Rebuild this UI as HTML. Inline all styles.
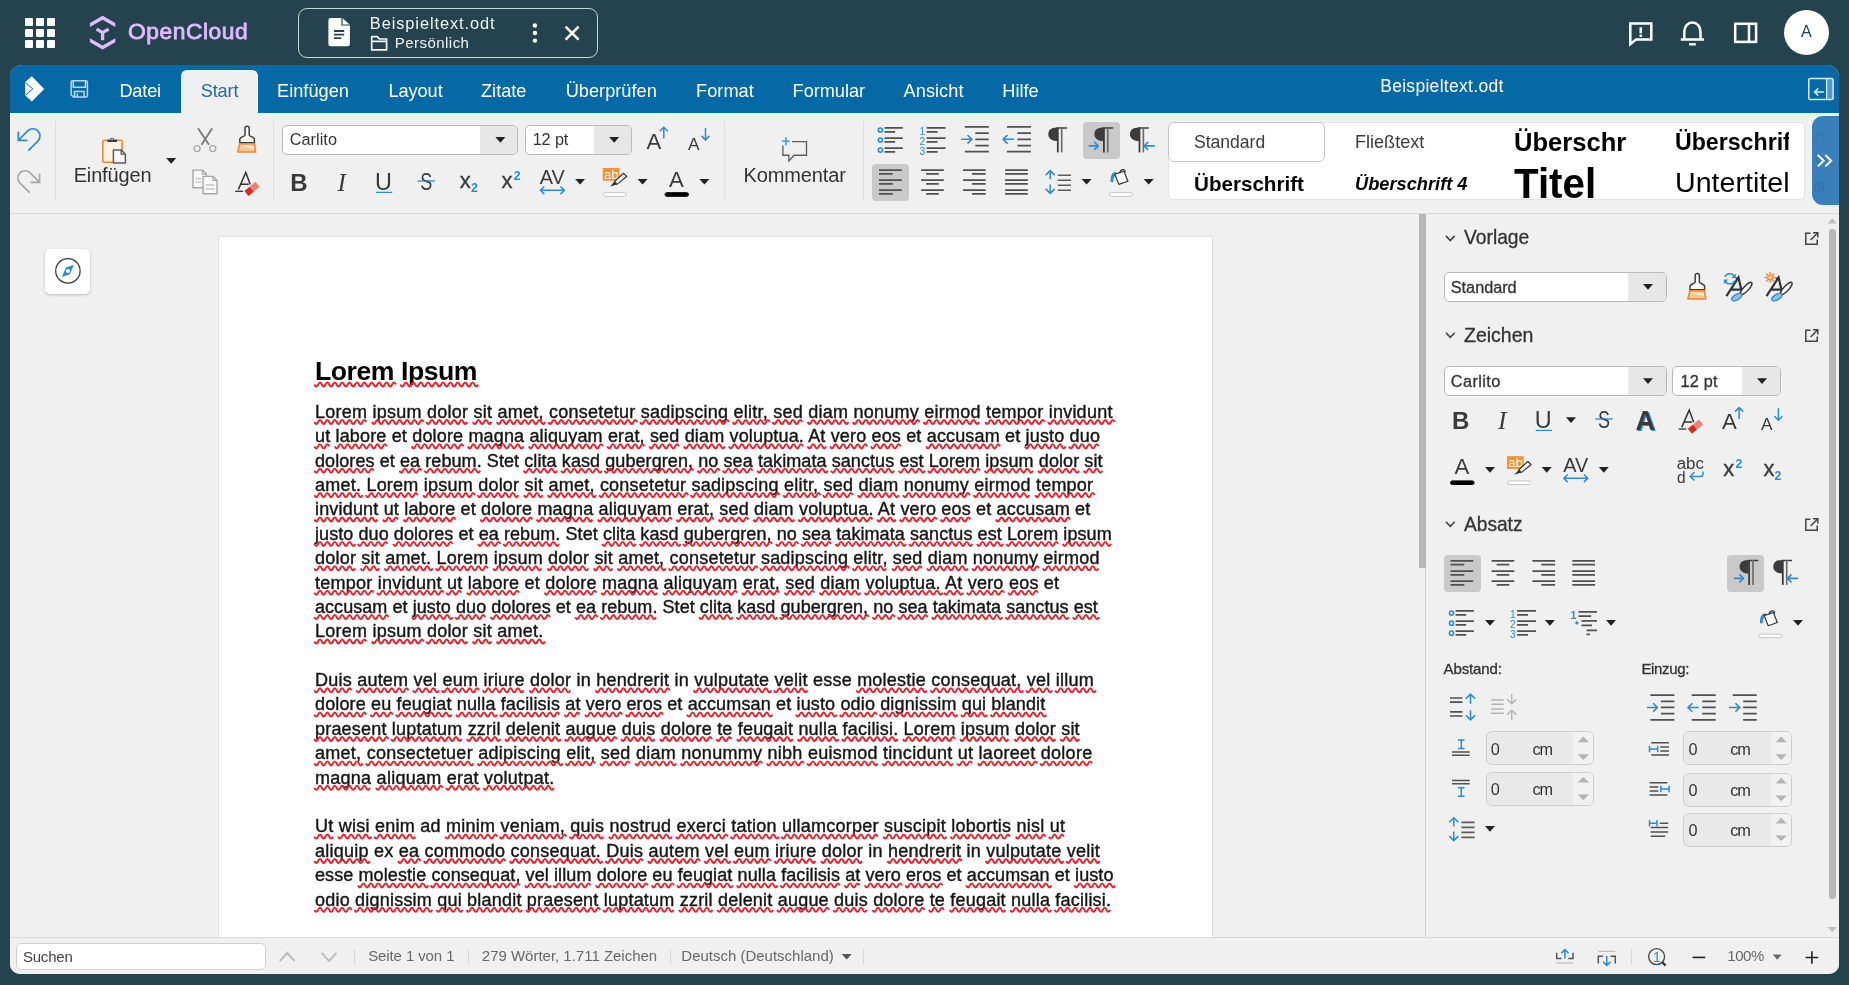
<!DOCTYPE html>
<html lang="de"><head><meta charset="utf-8"><title>Beispieltext.odt - OpenCloud</title>
<style>
html,body{margin:0;padding:0}
body{width:1849px;height:985px;overflow:hidden;background:#25434f;font-family:"Liberation Sans",sans-serif;position:relative}
.t{position:absolute;white-space:nowrap;line-height:1;display:block}
.b{position:absolute;box-sizing:border-box}
#top{filter:opacity(1);position:absolute;left:0;top:0;width:1849px;height:65px}
#frame{filter:opacity(1);position:absolute;left:10px;top:65px;width:1829px;height:909.4px;overflow:hidden;border-radius:12px 12px 10px 10px;background:#f0f0f0}
#fi{position:absolute;left:-10px;top:-65px;width:1849px;height:985px}
svg.ov{filter:opacity(1);position:absolute;left:0;top:0;pointer-events:none}

</style></head>
<body>
<div id="top">
<div class="b" style="left:25.0px;top:18.0px;width:8.3px;height:8.3px;background:#fff;border-radius:1px"></div>
<div class="b" style="left:36.0px;top:18.0px;width:8.3px;height:8.3px;background:#fff;border-radius:1px"></div>
<div class="b" style="left:47.0px;top:18.0px;width:8.3px;height:8.3px;background:#fff;border-radius:1px"></div>
<div class="b" style="left:25.0px;top:29.0px;width:8.3px;height:8.3px;background:#fff;border-radius:1px"></div>
<div class="b" style="left:36.0px;top:29.0px;width:8.3px;height:8.3px;background:#fff;border-radius:1px"></div>
<div class="b" style="left:47.0px;top:29.0px;width:8.3px;height:8.3px;background:#fff;border-radius:1px"></div>
<div class="b" style="left:25.0px;top:40.0px;width:8.3px;height:8.3px;background:#fff;border-radius:1px"></div>
<div class="b" style="left:36.0px;top:40.0px;width:8.3px;height:8.3px;background:#fff;border-radius:1px"></div>
<div class="b" style="left:47.0px;top:40.0px;width:8.3px;height:8.3px;background:#fff;border-radius:1px"></div>
<span class="t" id="t1" style="left:128.0px;top:20.0px;font-size:22.8px;color:#e2baff;letter-spacing:0.540px;-webkit-text-stroke:0.8px #e2baff;">OpenCloud</span>
<div class="b" style="left:298.0px;top:8.0px;width:299.5px;height:50.0px;border:1.3px solid #c9d3d7;border-radius:9px"></div>
<span class="t" id="t2" style="left:369.8px;top:14.7px;font-size:16.4px;color:#f0f4f5;letter-spacing:0.914px;">Beispieltext.odt</span>
<span class="t" id="t3" style="left:394.8px;top:35.1px;font-size:15px;color:#f0f4f5;letter-spacing:0.455px;">Persönlich</span>
<div class="b" style="left:1783.8px;top:9.7px;width:45.2px;height:45.2px;background:#fff;border-radius:50%"></div>
<span class="t" id="t4" style="left:1800.9px;top:24.2px;font-size:16px;color:#20434f;letter-spacing:0.928px;">A</span>
</div>
<div id="frame"><div id="fi">
<div class="b" style="left:10.0px;top:65.0px;width:1829.0px;height:48.0px;background:#0569a5"></div>
<div class="b" style="left:10.0px;top:113.0px;width:1829.0px;height:2.0px;background:#e0ffff"></div>
<div class="b" style="left:180.5px;top:69.5px;width:77.6px;height:45.5px;background:#f0f0f0;border-radius:6px 6px 0 0;border:1px solid #e0ffff;border-bottom:none"></div>
<span class="t" id="t5" style="left:119.4px;top:81.9px;font-size:18.2px;color:#fff;letter-spacing:-0.174px;">Datei</span>
<span class="t" id="t6" style="left:200.7px;top:81.9px;font-size:18.2px;color:#1f6aa0;letter-spacing:-0.144px;">Start</span>
<span class="t" id="t7" style="left:277.0px;top:81.9px;font-size:18.2px;color:#fff;letter-spacing:0.023px;">Einfügen</span>
<span class="t" id="t8" style="left:388.5px;top:81.9px;font-size:18.2px;color:#fff;letter-spacing:-0.085px;">Layout</span>
<span class="t" id="t9" style="left:481.0px;top:81.9px;font-size:18.2px;color:#fff;letter-spacing:0.000px;">Zitate</span>
<span class="t" id="t10" style="left:565.7px;top:81.9px;font-size:18.2px;color:#fff;letter-spacing:0.010px;">Überprüfen</span>
<span class="t" id="t11" style="left:696.0px;top:81.9px;font-size:18.2px;color:#fff;letter-spacing:0.032px;">Format</span>
<span class="t" id="t12" style="left:792.6px;top:81.9px;font-size:18.2px;color:#fff;letter-spacing:-0.046px;">Formular</span>
<span class="t" id="t13" style="left:903.6px;top:81.9px;font-size:18.2px;color:#fff;letter-spacing:0.035px;">Ansicht</span>
<span class="t" id="t14" style="left:1002.3px;top:81.9px;font-size:18.2px;color:#fff;letter-spacing:-0.038px;">Hilfe</span>
<span class="t" id="t15" style="left:1380.2px;top:78.3px;font-size:17.5px;color:#fff;letter-spacing:0.295px;">Beispieltext.odt</span>
<div class="b" style="left:10.0px;top:115.0px;width:1829.0px;height:98.0px;background:#f0f0f0"></div>
<div class="b" style="left:10.0px;top:213.0px;width:1829.0px;height:1.2px;background:#dadada"></div>
<div class="b" style="left:55.2px;top:120.6px;width:1.1px;height:79.6px;background:#dfdfdf"></div>
<div class="b" style="left:272.9px;top:120.6px;width:1.1px;height:79.6px;background:#dfdfdf"></div>
<div class="b" style="left:723.9px;top:120.6px;width:1.1px;height:79.6px;background:#dfdfdf"></div>
<div class="b" style="left:862.7px;top:120.6px;width:1.1px;height:79.6px;background:#dfdfdf"></div>
<div class="b" style="left:282.4px;top:125.1px;width:235.9px;height:29.6px;background:#fff;border:1px solid #b9b9b9;border-radius:5px;overflow:hidden"></div><div class="b" style="left:480.2px;top:126.1px;width:37.1px;height:27.6px;background:#e7e7e7;border-radius:0 4px 4px 0"></div>
<div class="b" style="left:524.7px;top:125.1px;width:106.9px;height:29.6px;background:#fff;border:1px solid #b9b9b9;border-radius:5px;overflow:hidden"></div><div class="b" style="left:594.0px;top:126.1px;width:36.6px;height:27.6px;background:#e7e7e7;border-radius:0 4px 4px 0"></div>
<span class="t" id="t16" style="left:289.7px;top:131.4px;font-size:16.25px;color:#333;letter-spacing:0.047px;">Carlito</span>
<span class="t" id="t17" style="left:532.7px;top:131.4px;font-size:16.25px;color:#333;letter-spacing:-0.111px;">12 pt</span>
<span class="t" id="t18" style="left:73.7px;top:165.0px;font-size:20px;color:#333;letter-spacing:-0.159px;">Einfügen</span>
<span class="t" id="t19" style="left:743.5px;top:165.1px;font-size:20px;color:#333;letter-spacing:-0.131px;">Kommentar</span>
<div class="b" style="left:872.2px;top:164.1px;width:37.1px;height:36.8px;background:#c9c9c9;border-radius:4px"></div>
<div class="b" style="left:1082.7px;top:122.1px;width:37.2px;height:36.7px;background:#c9c9c9;border-radius:4px"></div>
<div class="b" style="left:1167.7px;top:122.0px;width:637.8px;height:78.3px;background:#fff;border-radius:5px;border:1px solid #e4e4e4"></div>
<div class="b" style="left:1167.7px;top:122.0px;width:157.0px;height:39.6px;background:#fff;border:1px solid #c6c6c6;border-radius:6px"></div>
<div class="b" style="left:1167.7px;top:122px;width:621.3px;height:78.3px;overflow:hidden"><div style="position:absolute;left:-1167.7px;top:-122px">
<span class="t" id="t20" style="left:1193.6px;top:132.6px;font-size:18.4px;color:#3a3a3a;transform:scaleX(0.9539);transform-origin:0 0;">Standard</span>
<span class="t" id="t21" style="left:1354.5px;top:132.6px;font-size:18.4px;color:#3a3a3a;transform:scaleX(0.9828);transform-origin:0 0;">Fließtext</span>
<span class="t" id="t22" style="left:1514.3px;top:128.9px;font-size:26.5px;color:#000;font-weight:bold;transform:scaleX(0.9643);transform-origin:0 0;">Überschr</span>
<span class="t" id="t23" style="left:1674.5px;top:130.5px;font-size:23px;color:#000;font-weight:bold;transform:scaleX(1.0065);transform-origin:0 0;">Überschrift</span>
<span class="t" id="t24" style="left:1194.4px;top:172.5px;font-size:21px;color:#000;font-weight:bold;transform:scaleX(0.9810);transform-origin:0 0;">Überschrift</span>
<span class="t" id="t25" style="left:1354.5px;top:174.6px;font-size:18.6px;color:#000;font-weight:bold;font-style:italic;transform:scaleX(0.9808);transform-origin:0 0;">Überschrift 4</span>
<span class="t" id="t26" style="left:1514.3px;top:162.8px;font-size:42px;color:#000;font-weight:bold;transform:scaleX(0.9592);transform-origin:0 0;">Titel</span>
<span class="t" id="t27" style="left:1674.5px;top:170.3px;font-size:26.8px;color:#000;transform:scaleX(1.0678);transform-origin:0 0;">Untertitel</span>
</div></div>
<div class="b" style="left:1811.6px;top:116.3px;width:30.0px;height:89.0px;background:#397fbc;border-radius:11px 0 0 11px"></div>
<div class="b" style="left:10.0px;top:214.0px;width:1416.0px;height:723.0px;background:#f0f0f0"></div>
<div class="b" style="left:218.0px;top:236.0px;width:995.0px;height:720.0px;background:#fff;border:1px solid #dedede;border-radius:2px"></div>
<div class="b" style="left:45.0px;top:249.0px;width:45.2px;height:45.2px;background:#fff;border-radius:5px;box-shadow:0 1px 3px rgba(0,0,0,.22)"></div>
<span class="t" id="t28" style="left:315.0px;top:357.9px;font-size:26.6px;color:#000;font-weight:bold;letter-spacing:-0.45px;"><span class="w">Lorem</span> <span class="w">Ipsum</span></span>
<span class="t" id="t29" style="left:315.0px;top:402.8px;font-size:18px;color:#151515;letter-spacing:0.243px;-webkit-text-stroke:0.4px #151515;"><span class="w">Lorem</span> <span class="w">ipsum</span> <span class="w">dolor</span> <span class="w">sit</span> <span class="w">amet,</span> <span class="w">consetetur</span> <span class="w">sadipscing</span> <span class="w">elitr,</span> <span class="w">sed</span> <span class="w">diam</span> <span class="w">nonumy</span> <span class="w">eirmod</span> <span class="w">tempor</span> <span class="w">invidunt</span></span>
<span class="t" id="t30" style="left:315.0px;top:427.2px;font-size:18px;color:#151515;letter-spacing:0.162px;-webkit-text-stroke:0.4px #151515;"><span class="w">ut</span> <span class="w">labore</span> et <span class="w">dolore</span> <span class="w">magna</span> <span class="w">aliquyam</span> <span class="w">erat,</span> <span class="w">sed</span> <span class="w">diam</span> <span class="w">voluptua.</span> <span class="w">At</span> <span class="w">vero</span> <span class="w">eos</span> et <span class="w">accusam</span> et <span class="w">justo</span> <span class="w">duo</span></span>
<span class="t" id="t31" style="left:315.0px;top:451.5px;font-size:18px;color:#151515;letter-spacing:0.082px;-webkit-text-stroke:0.4px #151515;"><span class="w">dolores</span> et <span class="w">ea</span> <span class="w">rebum.</span> Stet <span class="w">clita</span> <span class="w">kasd</span> <span class="w">gubergren,</span> <span class="w">no</span> <span class="w">sea</span> <span class="w">takimata</span> <span class="w">sanctus</span> <span class="w">est</span> <span class="w">Lorem</span> <span class="w">ipsum</span> <span class="w">dolor</span> <span class="w">sit</span></span>
<span class="t" id="t32" style="left:315.0px;top:475.9px;font-size:18px;color:#151515;letter-spacing:0.226px;-webkit-text-stroke:0.4px #151515;"><span class="w">amet.</span> <span class="w">Lorem</span> <span class="w">ipsum</span> <span class="w">dolor</span> <span class="w">sit</span> <span class="w">amet,</span> <span class="w">consetetur</span> <span class="w">sadipscing</span> <span class="w">elitr,</span> <span class="w">sed</span> <span class="w">diam</span> <span class="w">nonumy</span> <span class="w">eirmod</span> <span class="w">tempor</span></span>
<span class="t" id="t33" style="left:315.0px;top:500.3px;font-size:18px;color:#151515;letter-spacing:0.179px;-webkit-text-stroke:0.4px #151515;"><span class="w">invidunt</span> <span class="w">ut</span> <span class="w">labore</span> et <span class="w">dolore</span> <span class="w">magna</span> <span class="w">aliquyam</span> <span class="w">erat,</span> <span class="w">sed</span> <span class="w">diam</span> <span class="w">voluptua.</span> <span class="w">At</span> <span class="w">vero</span> <span class="w">eos</span> et <span class="w">accusam</span> et</span>
<span class="t" id="t34" style="left:315.0px;top:524.7px;font-size:18px;color:#151515;letter-spacing:0.074px;-webkit-text-stroke:0.4px #151515;"><span class="w">justo</span> <span class="w">duo</span> <span class="w">dolores</span> et <span class="w">ea</span> <span class="w">rebum.</span> Stet <span class="w">clita</span> <span class="w">kasd</span> <span class="w">gubergren,</span> <span class="w">no</span> <span class="w">sea</span> <span class="w">takimata</span> <span class="w">sanctus</span> <span class="w">est</span> <span class="w">Lorem</span> <span class="w">ipsum</span></span>
<span class="t" id="t35" style="left:315.0px;top:549.1px;font-size:18px;color:#151515;letter-spacing:0.212px;-webkit-text-stroke:0.4px #151515;"><span class="w">dolor</span> <span class="w">sit</span> <span class="w">amet.</span> <span class="w">Lorem</span> <span class="w">ipsum</span> <span class="w">dolor</span> <span class="w">sit</span> <span class="w">amet,</span> <span class="w">consetetur</span> <span class="w">sadipscing</span> <span class="w">elitr,</span> <span class="w">sed</span> <span class="w">diam</span> <span class="w">nonumy</span> <span class="w">eirmod</span></span>
<span class="t" id="t36" style="left:315.0px;top:573.5px;font-size:18px;color:#151515;letter-spacing:0.242px;-webkit-text-stroke:0.4px #151515;"><span class="w">tempor</span> <span class="w">invidunt</span> <span class="w">ut</span> <span class="w">labore</span> et <span class="w">dolore</span> <span class="w">magna</span> <span class="w">aliquyam</span> <span class="w">erat,</span> <span class="w">sed</span> <span class="w">diam</span> <span class="w">voluptua.</span> <span class="w">At</span> <span class="w">vero</span> <span class="w">eos</span> et</span>
<span class="t" id="t37" style="left:315.0px;top:597.9px;font-size:18px;color:#151515;letter-spacing:0.054px;-webkit-text-stroke:0.4px #151515;"><span class="w">accusam</span> et <span class="w">justo</span> <span class="w">duo</span> <span class="w">dolores</span> et <span class="w">ea</span> <span class="w">rebum.</span> Stet <span class="w">clita</span> <span class="w">kasd</span> <span class="w">gubergren,</span> <span class="w">no</span> <span class="w">sea</span> <span class="w">takimata</span> <span class="w">sanctus</span> <span class="w">est</span></span>
<span class="t" id="t38" style="left:315.0px;top:622.3px;font-size:18px;color:#151515;letter-spacing:0.234px;-webkit-text-stroke:0.4px #151515;"><span class="w">Lorem</span> <span class="w">ipsum</span> <span class="w">dolor</span> <span class="w">sit</span> <span class="w">amet.</span></span>
<span class="t" id="t39" style="left:315.0px;top:671.1px;font-size:18px;color:#151515;letter-spacing:0.228px;-webkit-text-stroke:0.4px #151515;"><span class="w">Duis</span> <span class="w">autem</span> <span class="w">vel</span> <span class="w">eum</span> <span class="w">iriure</span> <span class="w">dolor</span> in <span class="w">hendrerit</span> in <span class="w">vulputate</span> <span class="w">velit</span> esse <span class="w">molestie</span> <span class="w">consequat,</span> <span class="w">vel</span> <span class="w">illum</span></span>
<span class="t" id="t40" style="left:315.0px;top:695.4px;font-size:18px;color:#151515;letter-spacing:0.147px;-webkit-text-stroke:0.4px #151515;"><span class="w">dolore</span> <span class="w">eu</span> <span class="w">feugiat</span> <span class="w">nulla</span> <span class="w">facilisis</span> <span class="w">at</span> <span class="w">vero</span> <span class="w">eros</span> et <span class="w">accumsan</span> et <span class="w">iusto</span> <span class="w">odio</span> <span class="w">dignissim</span> <span class="w">qui</span> <span class="w">blandit</span></span>
<span class="t" id="t41" style="left:315.0px;top:719.8px;font-size:18px;color:#151515;letter-spacing:0.196px;-webkit-text-stroke:0.4px #151515;"><span class="w">praesent</span> <span class="w">luptatum</span> <span class="w">zzril</span> <span class="w">delenit</span> <span class="w">augue</span> <span class="w">duis</span> <span class="w">dolore</span> <span class="w">te</span> <span class="w">feugait</span> <span class="w">nulla</span> <span class="w">facilisi.</span> <span class="w">Lorem</span> <span class="w">ipsum</span> <span class="w">dolor</span> <span class="w">sit</span></span>
<span class="t" id="t42" style="left:315.0px;top:744.2px;font-size:18px;color:#151515;letter-spacing:0.266px;-webkit-text-stroke:0.4px #151515;"><span class="w">amet,</span> <span class="w">consectetuer</span> <span class="w">adipiscing</span> <span class="w">elit,</span> <span class="w">sed</span> <span class="w">diam</span> <span class="w">nonummy</span> <span class="w">nibh</span> <span class="w">euismod</span> <span class="w">tincidunt</span> <span class="w">ut</span> <span class="w">laoreet</span> <span class="w">dolore</span></span>
<span class="t" id="t43" style="left:315.0px;top:768.6px;font-size:18px;color:#151515;letter-spacing:0.259px;-webkit-text-stroke:0.4px #151515;"><span class="w">magna</span> <span class="w">aliquam</span> <span class="w">erat</span> <span class="w">volutpat.</span></span>
<span class="t" id="t44" style="left:315.0px;top:817.4px;font-size:18px;color:#151515;letter-spacing:0.241px;-webkit-text-stroke:0.4px #151515;"><span class="w">Ut</span> <span class="w">wisi</span> <span class="w">enim</span> ad <span class="w">minim</span> <span class="w">veniam,</span> <span class="w">quis</span> <span class="w">nostrud</span> <span class="w">exerci</span> <span class="w">tation</span> <span class="w">ullamcorper</span> <span class="w">suscipit</span> <span class="w">lobortis</span> <span class="w">nisl</span> <span class="w">ut</span></span>
<span class="t" id="t45" style="left:315.0px;top:841.8px;font-size:18px;color:#151515;letter-spacing:0.245px;-webkit-text-stroke:0.4px #151515;"><span class="w">aliquip</span> ex <span class="w">ea</span> <span class="w">commodo</span> <span class="w">consequat.</span> <span class="w">Duis</span> <span class="w">autem</span> <span class="w">vel</span> <span class="w">eum</span> <span class="w">iriure</span> <span class="w">dolor</span> in <span class="w">hendrerit</span> in <span class="w">vulputate</span> <span class="w">velit</span></span>
<span class="t" id="t46" style="left:315.0px;top:866.2px;font-size:18px;color:#151515;letter-spacing:0.097px;-webkit-text-stroke:0.4px #151515;">esse <span class="w">molestie</span> <span class="w">consequat,</span> <span class="w">vel</span> <span class="w">illum</span> <span class="w">dolore</span> <span class="w">eu</span> <span class="w">feugiat</span> <span class="w">nulla</span> <span class="w">facilisis</span> <span class="w">at</span> <span class="w">vero</span> <span class="w">eros</span> et <span class="w">accumsan</span> et <span class="w">iusto</span></span>
<span class="t" id="t47" style="left:315.0px;top:890.6px;font-size:18px;color:#151515;letter-spacing:0.209px;-webkit-text-stroke:0.4px #151515;"><span class="w">odio</span> <span class="w">dignissim</span> <span class="w">qui</span> <span class="w">blandit</span> <span class="w">praesent</span> <span class="w">luptatum</span> <span class="w">zzril</span> <span class="w">delenit</span> <span class="w">augue</span> <span class="w">duis</span> <span class="w">dolore</span> <span class="w">te</span> <span class="w">feugait</span> <span class="w">nulla</span> <span class="w">facilisi.</span></span>
<div class="b" style="left:1426.0px;top:214.0px;width:413.0px;height:723.0px;background:#f0f0f0"></div>
<div class="b" style="left:1425.0px;top:214.0px;width:1.0px;height:723.0px;background:#d4d4d4"></div>
<div class="b" style="left:1419.2px;top:214.0px;width:6.8px;height:354.0px;background:#b7b7b7"></div>
<div class="b" style="left:1829.3px;top:229.0px;width:6.3px;height:670.0px;background:#b7b7b7;border-radius:3px"></div>
<span class="t" id="t48" style="left:1464.4px;top:227.3px;font-size:20.4px;color:#333;transform:scaleX(0.9440);transform-origin:0 0;-webkit-text-stroke:0.3px #333;">Vorlage</span>
<span class="t" id="t49" style="left:1464.4px;top:324.7px;font-size:20.4px;color:#333;transform:scaleX(0.9566);transform-origin:0 0;-webkit-text-stroke:0.3px #333;">Zeichen</span>
<span class="t" id="t50" style="left:1464.4px;top:513.9px;font-size:20.4px;color:#333;transform:scaleX(0.9383);transform-origin:0 0;-webkit-text-stroke:0.3px #333;">Absatz</span>
<div class="b" style="left:1444.0px;top:272.3px;width:222.8px;height:29.3px;background:#fff;border:1px solid #b9b9b9;border-radius:5px;overflow:hidden"></div><div class="b" style="left:1628.3px;top:273.3px;width:37.5px;height:27.3px;background:#e7e7e7;border-radius:0 4px 4px 0"></div>
<div class="b" style="left:1444.0px;top:366.4px;width:222.8px;height:29.2px;background:#fff;border:1px solid #b9b9b9;border-radius:5px;overflow:hidden"></div><div class="b" style="left:1628.3px;top:367.4px;width:37.5px;height:27.2px;background:#e7e7e7;border-radius:0 4px 4px 0"></div>
<div class="b" style="left:1672.0px;top:366.4px;width:108.8px;height:29.2px;background:#fff;border:1px solid #b9b9b9;border-radius:5px;overflow:hidden"></div><div class="b" style="left:1742.3px;top:367.4px;width:37.5px;height:27.2px;background:#e7e7e7;border-radius:0 4px 4px 0"></div>
<span class="t" id="t51" style="left:1450.8px;top:278.9px;font-size:16.25px;color:#333;letter-spacing:-0.019px;-webkit-text-stroke:0.3px #333;">Standard</span>
<span class="t" id="t52" style="left:1450.8px;top:373.0px;font-size:16.25px;color:#333;letter-spacing:0.419px;-webkit-text-stroke:0.3px #333;">Carlito</span>
<span class="t" id="t53" style="left:1680.4px;top:373.0px;font-size:16.25px;color:#333;letter-spacing:0.249px;-webkit-text-stroke:0.3px #333;">12 pt</span>
<div class="b" style="left:1444.0px;top:555.2px;width:37.0px;height:36.7px;background:#c9c9c9;border-radius:4px"></div>
<div class="b" style="left:1727.3px;top:555.2px;width:36.3px;height:36.7px;background:#c9c9c9;border-radius:4px"></div>
<span class="t" id="t54" style="left:1443.6px;top:660.8px;font-size:15px;color:#333;letter-spacing:-0.127px;-webkit-text-stroke:0.3px #333;">Abstand:</span>
<span class="t" id="t55" style="left:1641.4px;top:660.8px;font-size:15px;color:#333;letter-spacing:-0.350px;-webkit-text-stroke:0.3px #333;">Einzug:</span>
<div class="b" style="left:1485.5px;top:731.3px;width:108.3px;height:34.0px;background:#e9e9e9;border:1px solid #cdcdcd;border-radius:6px"></div><div class="b" style="left:1573.0px;top:732.3px;width:19.8px;height:32.0px;background:#f1f1f1;border-radius:0 5px 5px 0"></div><span class="t" id="t56" style="left:1490.7px;top:740.6px;font-size:16.25px;color:#333;">0</span><span class="t" id="t57" style="left:1532.4px;top:740.6px;font-size:16.25px;color:#333;letter-spacing:-1.086px;">cm</span>
<div class="b" style="left:1485.5px;top:771.7px;width:108.3px;height:34.0px;background:#e9e9e9;border:1px solid #cdcdcd;border-radius:6px"></div><div class="b" style="left:1573.0px;top:772.7px;width:19.8px;height:32.0px;background:#f1f1f1;border-radius:0 5px 5px 0"></div><span class="t" id="t58" style="left:1490.7px;top:781.0px;font-size:16.25px;color:#333;">0</span><span class="t" id="t59" style="left:1532.4px;top:781.0px;font-size:16.25px;color:#333;letter-spacing:-1.086px;">cm</span>
<div class="b" style="left:1683.3px;top:731.3px;width:108.3px;height:34.0px;background:#e9e9e9;border:1px solid #cdcdcd;border-radius:6px"></div><div class="b" style="left:1770.8px;top:732.3px;width:19.8px;height:32.0px;background:#f1f1f1;border-radius:0 5px 5px 0"></div><span class="t" id="t60" style="left:1688.5px;top:740.6px;font-size:16.25px;color:#333;">0</span><span class="t" id="t61" style="left:1730.2px;top:740.6px;font-size:16.25px;color:#333;letter-spacing:-1.086px;">cm</span>
<div class="b" style="left:1683.3px;top:772.6px;width:108.3px;height:34.0px;background:#e9e9e9;border:1px solid #cdcdcd;border-radius:6px"></div><div class="b" style="left:1770.8px;top:773.6px;width:19.8px;height:32.0px;background:#f1f1f1;border-radius:0 5px 5px 0"></div><span class="t" id="t62" style="left:1688.5px;top:781.9px;font-size:16.25px;color:#333;">0</span><span class="t" id="t63" style="left:1730.2px;top:781.9px;font-size:16.25px;color:#333;letter-spacing:-1.086px;">cm</span>
<div class="b" style="left:1683.3px;top:812.5px;width:108.3px;height:34.0px;background:#e9e9e9;border:1px solid #cdcdcd;border-radius:6px"></div><div class="b" style="left:1770.8px;top:813.5px;width:19.8px;height:32.0px;background:#f1f1f1;border-radius:0 5px 5px 0"></div><span class="t" id="t64" style="left:1688.5px;top:821.8px;font-size:16.25px;color:#333;">0</span><span class="t" id="t65" style="left:1730.2px;top:821.8px;font-size:16.25px;color:#333;letter-spacing:-1.086px;">cm</span>
<div class="b" style="left:10.0px;top:937.0px;width:1829.0px;height:38.0px;background:#f0f0f0"></div>
<div class="b" style="left:10.0px;top:937.0px;width:1829.0px;height:1.0px;background:#d9d9d9"></div>
<div class="b" style="left:16.2px;top:942.9px;width:249.5px;height:26.9px;background:#fff;border:1px solid #cfcfcf;border-radius:5px"></div>
<span class="t" id="t66" style="left:22.9px;top:948.5px;font-size:15px;color:#444;letter-spacing:-0.196px;">Suchen</span>
<div class="b" style="left:354.0px;top:948.6px;width:1.1px;height:15.7px;background:#d6d6d6"></div>
<div class="b" style="left:468.1px;top:948.6px;width:1.1px;height:15.7px;background:#d6d6d6"></div>
<div class="b" style="left:670.3px;top:948.6px;width:1.1px;height:15.7px;background:#d6d6d6"></div>
<div class="b" style="left:862.9px;top:948.6px;width:1.1px;height:15.7px;background:#d6d6d6"></div>
<div class="b" style="left:1631.2px;top:948.6px;width:1.1px;height:15.7px;background:#d6d6d6"></div>
<span class="t" id="t67" style="left:368.2px;top:948.2px;font-size:15px;color:#686868;letter-spacing:-0.105px;">Seite 1 von 1</span>
<span class="t" id="t68" style="left:481.8px;top:948.2px;font-size:15px;color:#686868;letter-spacing:-0.011px;">279 Wörter, 1.711 Zeichen</span>
<span class="t" id="t69" style="left:681.3px;top:948.2px;font-size:15px;color:#686868;letter-spacing:-0.004px;">Deutsch (Deutschland)</span>
<span class="t" id="t70" style="left:1727.3px;top:947.7px;font-size:15px;color:#686868;letter-spacing:-0.469px;">100%</span>
</div></div>
<svg class="ov" width="1849" height="985" viewBox="0 0 1849 985" fill="none">
<g fill="#e2baff"><polygon points="89.9,23 102.6,15.8 115.3,23 115.3,26.9 102.6,19.7 89.9,26.9"/><polygon points="89.9,38.3 102.6,45.5 115.3,38.3 115.3,42.2 102.6,49.4 89.9,42.2"/></g><g stroke="#e2baff" stroke-width="3.3"><path d="M102.6 31.5V40.2M102.6 32.6L96.6 29.1M102.6 32.6L108.6 29.1"/></g>
<path d="M330.600 17.900H341.400V25.600H349.900V44A2.200 2.200 0 0 1 347.700 46.200H330.600A2.200 2.200 0 0 1 328.400 44V20.100A2.200 2.200 0 0 1 330.600 17.900Z" fill="#fff"/><path d="M342.600 18.300L349.600 24.500H342.600Z" fill="#fff"/><path d="M334 31H344.200M334 34.600H344.200M334 38.100H341.200" stroke="#25434f" stroke-width="1.900"/>
<path d="M371.7 36.6h5.6l2 2.4h7.3v10.900h-14.9z M371.7 41.3h14.9" stroke="#f0f4f5" stroke-width="1.7" stroke-linejoin="round"/>
<circle cx="534.9" cy="25.5" r="2.2" fill="#fff"/>
<circle cx="534.9" cy="33" r="2.2" fill="#fff"/>
<circle cx="534.9" cy="40.6" r="2.2" fill="#fff"/>
<path d="M565.6 26.6L578.6 39.6M578.6 26.6L565.6 39.6" stroke="#fff" stroke-width="2.6"/>
<path d="M1630.3 23.5h21v16h-15.3l-5.7 4.6z" stroke="#fff" stroke-width="2.5" stroke-linejoin="miter"/><path d="M1640.8 27.3v6" stroke="#fff" stroke-width="2.6"/><rect x="1639.5" y="34.6" width="2.6" height="2.4" fill="#fff"/>
<path d="M1680.8 39.6h23.2M1684.3 39.6v-8.2a8.1 8.8 0 0 1 16.2 0v8.2" stroke="#fff" stroke-width="2.5"/><path d="M1689 44.3h6.8" stroke="#fff" stroke-width="2.4"/>
<rect x="1735.2" y="23.8" width="20.9" height="18.1" stroke="#fff" stroke-width="2.5"/><path d="M1749 23.8v18.1" stroke="#fff" stroke-width="2.5"/>
<polygon points="25.2,82 31.8,76.2 44.2,88.9 31.8,101.5 25.2,95.5" fill="#fff"/><path d="M25.6 82.6L32.8 88.9L25.6 95.2" stroke="#0569a5" stroke-width="1"/>
<g stroke="#b9d9f1" stroke-width="1.5"><path d="M72.8 80.8h13a1.6 1.6 0 0 1 1.6 1.6v13a1.6 1.6 0 0 1-1.6 1.6H73.4l-2.3-2.3V82.4a1.6 1.6 0 0 1 1.6-1.600z"/><path d="M73.3 80.8v6.4h12.2v-6.4M74.5 97v-5.6h9.6v5.6M77.3 97v-3.600"/></g>
<rect x="1826.6" y="78.6" width="6.5" height="21" fill="#4e97d1"/><rect x="1808.8" y="78.6" width="24.3" height="21" rx="1.5" stroke="#d6ecfa" stroke-width="1.5"/><path d="M1826.6 78.600v21" stroke="#d6ecfa" stroke-width="1.3"/><path d="M1814.600 92h9.200M1818.200 88.400l-3.600 3.600 3.600 3.600" stroke="#d6ecfa" stroke-width="1.5"/>
<path d="M18.3 131.8V140.3H27.4M18.3 140.3L27.7 130.86A7.2 7.2 0 0 1 37.9 141.04L28.2 150.7" stroke="#2b8cd1" stroke-width="1.7"/>
<g transform="translate(57.9 42) scale(-1 1)"><path d="M18.3 131.8V140.3H27.4M18.3 140.3L27.7 130.86A7.2 7.2 0 0 1 37.9 141.04L28.2 150.7" stroke="#a8a8a8" stroke-width="1.7"/></g>
<g transform="translate(101.8 137.5)" ><rect x="1" y="2.800" width="19.300" height="22" rx="1.500" fill="#fdf2e6" stroke="#ed8733" stroke-width="1.600"/><path d="M5.600 4.500V2.200H8.300A1.900 1.900 0 0 1 12.200 2.200H15.300V4.500Z" fill="#3a3a3a"/><circle cx="10.250" cy="1.900" r="0.800" fill="#fdf2e6"/><path d="M11.600 12.400H19.300L23.600 16.700V25.600H11.600Z" fill="#f7f7f7" stroke="#5e5e5e" stroke-width="1.500" stroke-linejoin="round"/><path d="M19.300 12.400V16.700H23.600" stroke="#5e5e5e" stroke-width="1.300"/></g>
<g transform="translate(166.2 158.0)" ><path d="M0 0H10L5 5.7Z" fill="#222"/></g>
<g transform="translate(193.8 128.0)" ><path d="M4.200 0.300L15.200 16.800M18.400 0.300L7.800 16.800" stroke="#7c7c7c" stroke-width="1.900"/><circle cx="3.300" cy="20.600" r="3" stroke="#a9a9a9" stroke-width="1.400"/><circle cx="19" cy="20.600" r="3" stroke="#a9a9a9" stroke-width="1.400"/></g>
<g transform="translate(237.0 126.4)" ><path d="M8 2A2.100 2.100 0 0 1 12.200 2V8.500C12.200 10.500 17.400 10 17.400 13V16.300H2.800V13C2.800 10 8 10.500 8 8.500Z" fill="#fafafa" stroke="#3f3f3f" stroke-width="1.500" stroke-linejoin="round"/><path d="M2.800 17.300H17.400L18.600 25.500H0.600Z" fill="#f8c891" stroke="#ed8733" stroke-width="1.500" stroke-linejoin="round"/><path d="M3.300 19.200L16.800 22.300L16.600 19.300Z" fill="#fdf0e0"/></g>
<g transform="translate(192.3 169.4)" ><path d="M0.7 0.7H10.1L14.1 4.7V18.3H0.7Z" fill="#f9f9f9" stroke="#a6a6a6" stroke-width="1.400" stroke-linejoin="round"/><path d="M10.1 0.7V4.7H14.1" stroke="#a6a6a6" stroke-width="1.200"/><path d="M3.0 9.3H9.0M3.0 12.8H9.0" stroke="#c4c4c4" stroke-width="1.3"/><path d="M10.8 7H20.700000000000003L24.700000000000003 11V24.3H10.8Z" fill="#f9f9f9" stroke="#a6a6a6" stroke-width="1.400" stroke-linejoin="round"/><path d="M20.700000000000003 7V11H24.700000000000003" stroke="#a6a6a6" stroke-width="1.200"/><path d="M13.3 15.6H22.3M13.3 19.5H22.3" stroke="#c4c4c4" stroke-width="1.5"/></g>
<g transform="translate(234.7 172.1)" ><path d="M3.700 17.300L11.100 0.300L15.600 12.500M6 12.200H14" stroke="#333" stroke-width="1.5" stroke-linejoin="miter"/><path d="M0.500 19.200H8.300" stroke="#333" stroke-width="1.3"/><g transform="translate(17.300 16.800) rotate(-40)"><rect x="-7.200" y="-3.200" width="6.800" height="6.400" fill="#d8281c"/><rect x="-0.400" y="-3.200" width="7.600" height="6.400" fill="#f47f76"/></g></g>
<g transform="translate(495.4 137.0)" ><path d="M0 0H10L5 5.7Z" fill="#222"/></g>
<g transform="translate(609.2 137.0)" ><path d="M0 0H10L5 5.7Z" fill="#222"/></g>
<g transform="translate(292.0 173.6)" ><text x="-1.7" y="17.1" font-family="Liberation Sans" font-size="24" font-weight="bold" font-style="normal" fill="#3a3a3a" >B</text></g>
<g transform="translate(338.1 173.6)" ><text x="-0.5" y="17.1" font-family="Liberation Serif" font-size="25.3" font-weight="normal" font-style="italic" fill="#3a3a3a" >I</text></g>
<g transform="translate(376.8 173.3)" ><text x="-1.7" y="16.8" font-family="Liberation Sans" font-size="23.4" font-weight="normal" font-style="normal" fill="#3a3a3a" >U</text><path d="M-0.8 19.100H15.400" stroke="#2b8cd1" stroke-width="1.300"/></g>
<g transform="translate(417.6 173.3)" ><text x="2.6" y="16.9" font-family="Liberation Sans" font-size="23.4" font-weight="normal" font-style="normal" fill="#3a3a3a" textLength="12" lengthAdjust="spacingAndGlyphs">S</text><path d="M0 7.700H17.400" stroke="#2b8cd1" stroke-width="1.300"/></g>
<g transform="translate(460.0 175.5)" ><text x="-0.2" y="12.2" font-family="Liberation Sans" font-size="22" font-weight="normal" font-style="normal" fill="#3a3a3a" stroke="#3a3a3a" stroke-width="0.35">x</text><text x="11" y="16.4" font-family="Liberation Sans" font-size="12.3" font-weight="bold" font-style="normal" fill="#2b8cd1" >2</text></g>
<g transform="translate(501.7 175.5)" ><text x="-0.2" y="12.2" font-family="Liberation Sans" font-size="22" font-weight="normal" font-style="normal" fill="#3a3a3a" stroke="#3a3a3a" stroke-width="0.35">x</text><text x="12" y="4.9" font-family="Liberation Sans" font-size="12.3" font-weight="bold" font-style="normal" fill="#2b8cd1" >2</text></g>
<g transform="translate(540.0 169.8)" ><text x="-0.2" y="14.4" font-family="Liberation Sans" font-size="20" font-weight="normal" font-style="normal" fill="#3a3a3a" textLength="25" lengthAdjust="spacingAndGlyphs">AV</text><path d="M0.5 20.500H24.300M4.300 16.700L0.500 20.500L4.300 24.300M20.500 16.700L24.300 20.500L20.500 24.300" stroke="#2b8cd1" stroke-width="1.5"/></g>
<g transform="translate(575.1 178.9)" ><path d="M0 0H10L5 5.7Z" fill="#222"/></g>
<g transform="translate(602.7 168.0)" ><rect x="0" y="0" width="16.700" height="12.700" fill="#f3923a"/><text x="1.2" y="10.6" font-family="Liberation Sans" font-size="12.5" font-weight="normal" font-style="normal" fill="#fff" textLength="14.5" lengthAdjust="spacingAndGlyphs">ab</text><path d="M20.800 5.300L24 8.500L14.200 16.400L11.800 13.500Z" fill="#fff" stroke="#333" stroke-width="1.2" stroke-linejoin="round"/><path d="M11.800 13.500L14.200 16.400L7.300 18.600Z" fill="#333"/></g>
<g transform="translate(602.7 192.2)" ><rect x="0.5" y="0.5" width="23.2" height="3.600" rx="1.800" fill="#fff" stroke="#c4c4c4" stroke-width="1"/></g>
<g transform="translate(637.6 178.9)" ><path d="M0 0H10L5 5.7Z" fill="#222"/></g>
<g transform="translate(669.3 170.6)" ><text x="-0.4" y="15.9" font-family="Liberation Sans" font-size="22.2" font-weight="normal" font-style="normal" fill="#3a3a3a" >A</text></g>
<g transform="translate(664.5 192.2)" ><rect x="0.5" y="0.5" width="23.5" height="3.600" rx="1.800" fill="#000" stroke="#000" stroke-width="1"/></g>
<g transform="translate(699.4 178.9)" ><path d="M0 0H10L5 5.7Z" fill="#222"/></g>
<g transform="translate(647.0 126.4)" ><text x="-0.4" y="22.2" font-family="Liberation Sans" font-size="22.2" font-weight="normal" font-style="normal" fill="#3a3a3a" >A</text><path d="M16.800 0.800V12.100M12.800 4.800L16.800 0.800L20.800 4.800" stroke="#2b8cd1" stroke-width="1.5"/></g>
<g transform="translate(688.4 127.9)" ><text x="-0.3" y="21.8" font-family="Liberation Sans" font-size="17.3" font-weight="normal" font-style="normal" fill="#3a3a3a" >A</text><path d="M17.100 0V12M13.100 8L17.100 12L21.100 8" stroke="#2b8cd1" stroke-width="1.5"/></g>
<g transform="translate(781.8 137.3)" ><path d="M10.200 4.300H24.700V17.900H12.400L7.100 23.800V17.900H1.100V8.300" stroke="#5e5e5e" stroke-width="1.350" stroke-linejoin="miter"/><path d="M0 3.900H8.200M4.100 0V7.900" stroke="#2b8cd1" stroke-width="1.300"/></g>
<g transform="translate(877.5 127.0)" ><circle cx="2.9" cy="3.0" r="2.1" stroke="#2b8cd1" stroke-width="1.5" fill="#dcecf8"/><path d="M7.0 0.9H25.3M7.0 4.8H17.6" stroke="#505050" stroke-width="1.75"/><circle cx="2.9" cy="13.1" r="2.1" stroke="#2b8cd1" stroke-width="1.5" fill="#dcecf8"/><path d="M7.0 11.0H25.3M7.0 14.9H17.6" stroke="#505050" stroke-width="1.75"/><circle cx="2.9" cy="23.1" r="2.1" stroke="#2b8cd1" stroke-width="1.5" fill="#dcecf8"/><path d="M7.0 21.0H25.3M7.0 24.9H17.6" stroke="#505050" stroke-width="1.75"/></g>
<g transform="translate(919.9 127.0)" ><text x="-0.3" y="8.0" font-family="Liberation Sans" font-size="10.3" fill="#2b8cd1">1</text><path d="M6.7 0.9H25.7M6.7 4.8H17.7" stroke="#505050" stroke-width="1.75"/><text x="-0.3" y="18.1" font-family="Liberation Sans" font-size="10.3" fill="#2b8cd1">2</text><path d="M6.7 11.0H25.7M6.7 14.9H17.7" stroke="#505050" stroke-width="1.75"/><text x="-0.3" y="28.1" font-family="Liberation Sans" font-size="10.3" fill="#2b8cd1">3</text><path d="M6.7 21.0H25.7M6.7 24.9H17.7" stroke="#505050" stroke-width="1.75"/></g>
<g transform="translate(960.8 125.9)" ><path d="M4.0 1.0H28.0M14.5 7.2H28.0M14.5 13.4H28.0M14.5 19.6H28.0M4.0 25.8H28.0" stroke="#505050" stroke-width="1.75"/><path d="M0.5 13.4H11M6.7 9.100000000000001L11 13.4L6.7 17.7" stroke="#2b8cd1" stroke-width="1.6"/></g>
<g transform="translate(1002.4 125.9)" ><path d="M4.5 1.0H28.5M15.0 7.2H28.5M15.0 13.4H28.5M15.0 19.6H28.5M4.5 25.8H28.5" stroke="#505050" stroke-width="1.75"/><path d="M11.5 13.4H0.8M5.1 9.100000000000001L0.8 13.4L5.1 17.7" stroke="#2b8cd1" stroke-width="1.6"/></g>
<g transform="translate(1048.3 127.4)" ><path d="M8.3 0.6H18.8" stroke="#3c3c3c" stroke-width="1.5"/><path d="M9 0C2 0 0 3.2 0 6.8C0 10.600 3 13.600 9 13.600Z" fill="#3c3c3c"/><path d="M9.5 0V25" stroke="#3c3c3c" stroke-width="1.8"/><path d="M13.4 0V25" stroke="#686868" stroke-width="1.6"/></g>
<g transform="translate(1088.4 127.4)" ><path d="M14.3 0.6H24.8" stroke="#3c3c3c" stroke-width="1.5"/><path d="M15 0C8 0 6 3.2 6 6.8C6 10.600 9 13.600 15 13.600Z" fill="#3c3c3c"/><path d="M15.5 0V25" stroke="#3c3c3c" stroke-width="1.8"/><path d="M19.4 0V25" stroke="#686868" stroke-width="1.6"/><path d="M0.3 18.5H9.8M5.800000000000001 14.5L9.8 18.5L5.800000000000001 22.5" stroke="#2b8cd1" stroke-width="1.6"/></g>
<g transform="translate(1130.0 127.4)" ><path d="M8.3 0.6H18.8" stroke="#3c3c3c" stroke-width="1.5"/><path d="M9 0C2 0 0 3.2 0 6.8C0 10.600 3 13.600 9 13.600Z" fill="#3c3c3c"/><path d="M9.5 0V25" stroke="#3c3c3c" stroke-width="1.8"/><path d="M13.4 0V25" stroke="#686868" stroke-width="1.6"/><path d="M24.8 18.5H14.2M18.2 14.5L14.2 18.5L18.2 22.5" stroke="#2b8cd1" stroke-width="1.6"/></g>
<g transform="translate(879.0 169.4)" ><path d="M0.0 0.7H22.7M0.0 4.4H13.8M0.0 10.8H22.7M0.0 14.5H13.8M0.0 20.8H22.7M0.0 24.5H13.8" stroke="#505050" stroke-width="1.75"/></g>
<g transform="translate(921.1 169.4)" ><path d="M0.0 0.7H22.7M5.0 4.4H17.7M0.0 10.8H22.7M5.0 14.5H17.7M0.0 20.8H22.7M5.0 24.5H17.7" stroke="#505050" stroke-width="1.75"/></g>
<g transform="translate(963.0 169.4)" ><path d="M0.0 0.7H22.7M8.9 4.4H22.7M0.0 10.8H22.7M8.9 14.5H22.7M0.0 20.8H22.7M8.9 24.5H22.7" stroke="#505050" stroke-width="1.75"/></g>
<g transform="translate(1005.1 169.4)" ><path d="M0.0 0.7H22.7M0.0 4.4H22.7M0.0 10.8H22.7M0.0 14.5H22.7M0.0 20.8H22.7M0.0 24.5H22.7" stroke="#505050" stroke-width="1.75"/></g>
<g transform="translate(1044.5 169.8)" ><path d="M13.3 5.4H26.5M13.3 10.4H26.5M13.3 15.4H26.5M13.3 20.4H26.5" stroke="#5c5c5c" stroke-width="1.6"/><path d="M5.700 9.500V0.800M1.200 5.300L5.700 0.800L10.200 5.300M5.700 14.600V23.600M1.200 19.100L5.700 23.600L10.200 19.100" stroke="#2b8cd1" stroke-width="1.5"/></g>
<g transform="translate(1081.6 178.9)" ><path d="M0 0H10L5 5.7Z" fill="#222"/></g>
<g transform="translate(1109.6 169.0)" ><path d="M1 13C0.800 7 2.200 3.500 6.500 2.800L7.500 5.500C4.500 6.500 3.800 9 3.800 13Z" fill="#2b8cd1"/><path d="M5.200 5.300L14.300 2.200L18.300 12.200L9.200 15.400Z" fill="#fff" stroke="#333" stroke-width="1.2" stroke-linejoin="round"/><path d="M10.300 4.200C10.300 -0.200 15.800 -0.800 15.800 3.300" stroke="#333" stroke-width="1.2"/></g>
<g transform="translate(1109.0 192.2)" ><rect x="0.5" y="0.5" width="23.2" height="3.600" rx="1.800" fill="#fff" stroke="#c4c4c4" stroke-width="1"/></g>
<g transform="translate(1143.7 178.9)" ><path d="M0 0H10L5 5.7Z" fill="#222"/></g>
<path d="M1817.800 155L1823.700 160.700L1817.800 166.400M1825.300 155L1831.200 160.700L1825.300 166.400" stroke="#fff" stroke-width="2"/>
<path d="M1814.800 137L1819.100 132.700L1823.400 137" stroke="#3373ad" stroke-width="1.400"/>
<path d="M1814.800 158.500L1819.100 162.800" stroke="#3373ad" stroke-width="1.400"/>
<rect x="1815.300" y="182.800" width="8" height="8" stroke="#3373ad" stroke-width="1.300"/><path d="M1819.300 182.800V190.800M1819.300 186.800H1823.300" stroke="#3373ad" stroke-width="1.300"/>
<g transform="translate(1445.3 235.1)" ><path d="M0.600 0.800L5 5.400L9.400 0.800" stroke="#444" stroke-width="1.600"/></g>
<g transform="translate(1445.3 332.0)" ><path d="M0.600 0.800L5 5.400L9.400 0.800" stroke="#444" stroke-width="1.600"/></g>
<g transform="translate(1445.3 521.0)" ><path d="M0.600 0.800L5 5.400L9.400 0.800" stroke="#444" stroke-width="1.600"/></g>
<g transform="translate(1805.0 232.0)" ><path d="M5.500 1.200H0.800V12.200H12.200V7.500" stroke="#444" stroke-width="1.500"/><path d="M8 0.800H12.800V5.600M12.600 1L5.600 8" stroke="#444" stroke-width="1.500"/></g>
<g transform="translate(1805.0 329.0)" ><path d="M5.500 1.200H0.800V12.200H12.200V7.500" stroke="#444" stroke-width="1.500"/><path d="M8 0.800H12.800V5.600M12.600 1L5.600 8" stroke="#444" stroke-width="1.500"/></g>
<g transform="translate(1805.0 518.0)" ><path d="M5.500 1.200H0.800V12.200H12.200V7.500" stroke="#444" stroke-width="1.500"/><path d="M8 0.800H12.800V5.600M12.600 1L5.600 8" stroke="#444" stroke-width="1.500"/></g>
<g transform="translate(1643.0 284.1)" ><path d="M0 0H10L5 5.7Z" fill="#222"/></g>
<g transform="translate(1643.0 378.2)" ><path d="M0 0H10L5 5.7Z" fill="#222"/></g>
<g transform="translate(1757.0 378.2)" ><path d="M0 0H10L5 5.7Z" fill="#222"/></g>
<g transform="translate(1687.2 273.5)" ><path d="M8 2A2.100 2.100 0 0 1 12.200 2V8.500C12.200 10.500 17.400 10 17.400 13V16.300H2.800V13C2.800 10 8 10.500 8 8.500Z" fill="#fafafa" stroke="#3f3f3f" stroke-width="1.500" stroke-linejoin="round"/><path d="M2.800 17.300H17.400L18.600 25.500H0.600Z" fill="#f8c891" stroke="#ed8733" stroke-width="1.500" stroke-linejoin="round"/><path d="M3.300 19.200L16.800 22.300L16.600 19.300Z" fill="#fdf0e0"/></g>
<g transform="translate(1723.5 272.8)" ><path d="M2.900 23.400L15 4.700L17.800 16.600M7.900 16.800H17.800M15.200 4.900L12.300 6.300" stroke="#333" stroke-width="2.200" stroke-linejoin="miter"/><g transform="translate(22.700 15.600) rotate(-47)"><ellipse cx="0" cy="0" rx="8" ry="2.500" fill="#fff" stroke="#333" stroke-width="1.400"/></g><g transform="translate(13.200 24.300) rotate(-33)"><ellipse cx="0" cy="0" rx="5.600" ry="2.700" fill="#8cc2ee" stroke="#2b8cd1" stroke-width="1.300"/></g><path d="M11.200 4.300A5.200 5.200 0 0 0 1.400 4.300M1.400 7.600A5.200 5.200 0 0 0 11.200 7.600" stroke="#2b8cd1" stroke-width="1.500"/><path d="M12.300 0.800V5.200H7.900Z M0.300 11.100V6.700H4.700Z" fill="#2b8cd1"/></g>
<g transform="translate(1763.6 272.8)" ><path d="M2.900 23.400L15 4.700L17.800 16.600M7.900 16.800H17.800M15.200 4.900L12.300 6.300" stroke="#333" stroke-width="2.200" stroke-linejoin="miter"/><g transform="translate(22.700 15.600) rotate(-47)"><ellipse cx="0" cy="0" rx="8" ry="2.500" fill="#fff" stroke="#333" stroke-width="1.400"/></g><g transform="translate(13.200 24.300) rotate(-33)"><ellipse cx="0" cy="0" rx="5.600" ry="2.700" fill="#8cc2ee" stroke="#2b8cd1" stroke-width="1.300"/></g><path d="M8.7 4.7L12.1 4.7M8.1 6.3L10.5 8.7M6.5 6.9L6.5 10.3M4.9 6.3L2.5 8.7M4.3 4.7L0.9 4.7M4.9 3.1L2.5 0.7M6.5 2.5L6.5 -0.9M8.1 3.1L10.5 0.7" stroke="#ed8733" stroke-width="1.300"/><circle cx="6.5" cy="4.7" r="2.300" fill="#fde6cc" stroke="#ed8733" stroke-width="1.100"/></g>
<g transform="translate(1453.8 411.6)" ><text x="-1.7" y="17.1" font-family="Liberation Sans" font-size="24" font-weight="bold" font-style="normal" fill="#3a3a3a" >B</text></g>
<g transform="translate(1498.4 411.6)" ><text x="-0.5" y="17.1" font-family="Liberation Serif" font-size="25.3" font-weight="normal" font-style="italic" fill="#3a3a3a" >I</text></g>
<g transform="translate(1536.5 411.3)" ><text x="-1.7" y="16.8" font-family="Liberation Sans" font-size="23.4" font-weight="normal" font-style="normal" fill="#3a3a3a" >U</text><path d="M-0.8 19.100H15.400" stroke="#2b8cd1" stroke-width="1.300"/></g>
<g transform="translate(1566.0 417.3)" ><path d="M0 0H10L5 5.7Z" fill="#222"/></g>
<g transform="translate(1595.4 411.3)" ><text x="2.6" y="16.9" font-family="Liberation Sans" font-size="23.4" font-weight="normal" font-style="normal" fill="#3a3a3a" textLength="12" lengthAdjust="spacingAndGlyphs">S</text><path d="M0 7.700H17.400" stroke="#2b8cd1" stroke-width="1.300"/></g>
<g transform="translate(1636.2 410.4)" ><text x="0.9" y="20.7" font-family="Liberation Sans" font-size="27.5" font-weight="bold" font-style="normal" fill="#2b8cd1" textLength="19.5" lengthAdjust="spacingAndGlyphs">A</text><text x="-0.6" y="19.3" font-family="Liberation Sans" font-size="27.5" font-weight="bold" font-style="normal" fill="#3a3a3a" textLength="19.5" lengthAdjust="spacingAndGlyphs">A</text></g>
<g transform="translate(1678.1 409.8)" ><path d="M3.700 17.300L11.100 0.300L15.600 12.500M6 12.200H14" stroke="#333" stroke-width="1.5" stroke-linejoin="miter"/><path d="M0.500 19.200H8.300" stroke="#333" stroke-width="1.3"/><g transform="translate(17.300 16.800) rotate(-40)"><rect x="-7.200" y="-3.200" width="6.800" height="6.400" fill="#d8281c"/><rect x="-0.400" y="-3.200" width="7.600" height="6.400" fill="#f47f76"/></g></g>
<g transform="translate(1722.3 406.8)" ><text x="-0.4" y="22.2" font-family="Liberation Sans" font-size="22.2" font-weight="normal" font-style="normal" fill="#3a3a3a" >A</text><path d="M16.800 0.800V12.100M12.800 4.800L16.800 0.800L20.800 4.800" stroke="#2b8cd1" stroke-width="1.5"/></g>
<g transform="translate(1761.3 408.3)" ><text x="-0.3" y="21.8" font-family="Liberation Sans" font-size="17.3" font-weight="normal" font-style="normal" fill="#3a3a3a" >A</text><path d="M17.100 0V12M13.100 8L17.100 12L21.100 8" stroke="#2b8cd1" stroke-width="1.5"/></g>
<g transform="translate(1454.9 458.4)" ><text x="-0.4" y="15.9" font-family="Liberation Sans" font-size="22.2" font-weight="normal" font-style="normal" fill="#3a3a3a" >A</text></g>
<g transform="translate(1450.0 480.4)" ><rect x="0.5" y="0.5" width="23.6" height="3.600" rx="1.800" fill="#000" stroke="#000" stroke-width="1"/></g>
<g transform="translate(1485.0 467.0)" ><path d="M0 0H10L5 5.7Z" fill="#222"/></g>
<g transform="translate(1507.0 456.2)" ><rect x="0" y="0" width="16.700" height="12.700" fill="#f3923a"/><text x="1.2" y="10.6" font-family="Liberation Sans" font-size="12.5" font-weight="normal" font-style="normal" fill="#fff" textLength="14.5" lengthAdjust="spacingAndGlyphs">ab</text><path d="M20.800 5.300L24 8.500L14.200 16.400L11.800 13.500Z" fill="#fff" stroke="#333" stroke-width="1.2" stroke-linejoin="round"/><path d="M11.800 13.500L14.200 16.400L7.300 18.600Z" fill="#333"/></g>
<g transform="translate(1507.0 480.4)" ><rect x="0.5" y="0.5" width="23.5" height="3.600" rx="1.800" fill="#fff" stroke="#c4c4c4" stroke-width="1"/></g>
<g transform="translate(1541.7 467.0)" ><path d="M0 0H10L5 5.7Z" fill="#222"/></g>
<g transform="translate(1563.4 457.8)" ><text x="-0.2" y="14.4" font-family="Liberation Sans" font-size="20" font-weight="normal" font-style="normal" fill="#3a3a3a" textLength="25" lengthAdjust="spacingAndGlyphs">AV</text><path d="M0.5 20.500H24.300M4.300 16.700L0.500 20.500L4.300 24.300M20.500 16.700L24.300 20.500L20.500 24.300" stroke="#2b8cd1" stroke-width="1.5"/></g>
<g transform="translate(1598.8 467.0)" ><path d="M0 0H10L5 5.7Z" fill="#222"/></g>
<g transform="translate(1677.0 459.1)" ><text x="-0.3" y="10" font-family="Liberation Sans" font-size="17.3" font-weight="normal" font-style="normal" fill="#3a3a3a" textLength="27.3" lengthAdjust="spacingAndGlyphs">abc</text><text x="0" y="24.2" font-family="Liberation Sans" font-size="17.3" font-weight="normal" font-style="normal" fill="#3a3a3a" textLength="8.6" lengthAdjust="spacingAndGlyphs">d</text><path d="M26 12.300V15A2.300 2.300 0 0 1 23.700 17.300H13.300M17.400 13.200L13.300 17.300L17.400 21.400" stroke="#2b8cd1" stroke-width="1.500"/></g>
<g transform="translate(1723.5 463.3)" ><text x="-0.2" y="12.2" font-family="Liberation Sans" font-size="22" font-weight="normal" font-style="normal" fill="#3a3a3a" stroke="#3a3a3a" stroke-width="0.35">x</text><text x="12" y="4.9" font-family="Liberation Sans" font-size="12.3" font-weight="bold" font-style="normal" fill="#2b8cd1" >2</text></g>
<g transform="translate(1763.6 463.3)" ><text x="-0.2" y="12.2" font-family="Liberation Sans" font-size="22" font-weight="normal" font-style="normal" fill="#3a3a3a" stroke="#3a3a3a" stroke-width="0.35">x</text><text x="11" y="16.4" font-family="Liberation Sans" font-size="12.3" font-weight="bold" font-style="normal" fill="#2b8cd1" >2</text></g>
<g transform="translate(1450.5 560.3)" ><path d="M0.0 0.7H22.7M0.0 4.4H13.8M0.0 10.8H22.7M0.0 14.5H13.8M0.0 20.8H22.7M0.0 24.5H13.8" stroke="#505050" stroke-width="1.75"/></g>
<g transform="translate(1491.6 560.3)" ><path d="M0.0 0.7H22.7M5.0 4.4H17.7M0.0 10.8H22.7M5.0 14.5H17.7M0.0 20.8H22.7M5.0 24.5H17.7" stroke="#505050" stroke-width="1.75"/></g>
<g transform="translate(1532.4 560.3)" ><path d="M0.0 0.7H22.7M8.9 4.4H22.7M0.0 10.8H22.7M8.9 14.5H22.7M0.0 20.8H22.7M8.9 24.5H22.7" stroke="#505050" stroke-width="1.75"/></g>
<g transform="translate(1572.3 560.3)" ><path d="M0.0 0.7H22.7M0.0 4.4H22.7M0.0 10.8H22.7M0.0 14.5H22.7M0.0 20.8H22.7M0.0 24.5H22.7" stroke="#505050" stroke-width="1.75"/></g>
<g transform="translate(1733.6 559.9)" ><path d="M14.3 0.6H24.8" stroke="#3c3c3c" stroke-width="1.5"/><path d="M15 0C8 0 6 3.2 6 6.8C6 10.600 9 13.600 15 13.600Z" fill="#3c3c3c"/><path d="M15.5 0V25" stroke="#3c3c3c" stroke-width="1.8"/><path d="M19.4 0V25" stroke="#686868" stroke-width="1.6"/><path d="M0.3 18.5H9.8M5.800000000000001 14.5L9.8 18.5L5.800000000000001 22.5" stroke="#2b8cd1" stroke-width="1.6"/></g>
<g transform="translate(1773.3 559.9)" ><path d="M8.3 0.6H18.8" stroke="#3c3c3c" stroke-width="1.5"/><path d="M9 0C2 0 0 3.2 0 6.8C0 10.600 3 13.600 9 13.600Z" fill="#3c3c3c"/><path d="M9.5 0V25" stroke="#3c3c3c" stroke-width="1.8"/><path d="M13.4 0V25" stroke="#686868" stroke-width="1.6"/><path d="M24.8 18.5H14.2M18.2 14.5L14.2 18.5L18.2 22.5" stroke="#2b8cd1" stroke-width="1.6"/></g>
<g transform="translate(1448.6 610.1)" ><circle cx="2.9" cy="3.0" r="2.1" stroke="#2b8cd1" stroke-width="1.5" fill="#dcecf8"/><path d="M7.0 0.9H25.3M7.0 4.8H17.6" stroke="#505050" stroke-width="1.75"/><circle cx="2.9" cy="13.1" r="2.1" stroke="#2b8cd1" stroke-width="1.5" fill="#dcecf8"/><path d="M7.0 11.0H25.3M7.0 14.9H17.6" stroke="#505050" stroke-width="1.75"/><circle cx="2.9" cy="23.1" r="2.1" stroke="#2b8cd1" stroke-width="1.5" fill="#dcecf8"/><path d="M7.0 21.0H25.3M7.0 24.9H17.6" stroke="#505050" stroke-width="1.75"/></g>
<g transform="translate(1485.0 620.0)" ><path d="M0 0H10L5 5.7Z" fill="#222"/></g>
<g transform="translate(1510.4 610.1)" ><text x="-0.3" y="8.0" font-family="Liberation Sans" font-size="10.3" fill="#2b8cd1">1</text><path d="M6.7 0.9H25.7M6.7 4.8H17.7" stroke="#505050" stroke-width="1.75"/><text x="-0.3" y="18.1" font-family="Liberation Sans" font-size="10.3" fill="#2b8cd1">2</text><path d="M6.7 11.0H25.7M6.7 14.9H17.7" stroke="#505050" stroke-width="1.75"/><text x="-0.3" y="28.1" font-family="Liberation Sans" font-size="10.3" fill="#2b8cd1">3</text><path d="M6.7 21.0H25.7M6.7 24.9H17.7" stroke="#505050" stroke-width="1.75"/></g>
<g transform="translate(1544.9 620.0)" ><path d="M0 0H10L5 5.7Z" fill="#222"/></g>
<g transform="translate(1571.0 610.3)" ><text x="-0.5" y="8.3" font-family="Liberation Sans" font-weight="bold" font-size="10.5" fill="#2b8cd1">1</text><path d="M7.5 1.5H26.0M7.5 5.8H20.0" stroke="#505050" stroke-width="1.75"/><circle cx="5.8" cy="12.6" r="1.6" fill="#2b8cd1"/><path d="M10.5 10.6H26.0M10.5 15.0H21.0" stroke="#505050" stroke-width="1.75"/><path d="M15.5 20.2H26.0M15.5 24.2H19.0" stroke="#505050" stroke-width="1.75"/></g>
<g transform="translate(1606.0 620.0)" ><path d="M0 0H10L5 5.7Z" fill="#222"/></g>
<g transform="translate(1759.0 610.3)" ><path d="M1 13C0.800 7 2.200 3.500 6.500 2.800L7.500 5.500C4.500 6.500 3.800 9 3.800 13Z" fill="#2b8cd1"/><path d="M5.200 5.300L14.300 2.200L18.300 12.200L9.200 15.400Z" fill="#fff" stroke="#333" stroke-width="1.2" stroke-linejoin="round"/><path d="M10.300 4.200C10.300 -0.200 15.800 -0.800 15.800 3.300" stroke="#333" stroke-width="1.2"/></g>
<g transform="translate(1758.1 633.6)" ><rect x="0.5" y="0.5" width="23.6" height="3.600" rx="1.800" fill="#fff" stroke="#c4c4c4" stroke-width="1"/></g>
<g transform="translate(1793.0 620.0)" ><path d="M0 0H10L5 5.7Z" fill="#222"/></g>
<g transform="translate(1450.0 693.4)" ><path d="M0.0 4.6H12.5M0.0 8.8H12.5M0.0 18.4H12.5M0.0 22.6H12.5" stroke="#505050" stroke-width="1.7"/><path d="M20.500 10.400V0.800M15.800 5.400L20.500 0.800L25.200 5.400M20.500 16.800V26.400M15.800 21.800L20.500 26.400L25.200 21.800" stroke="#2b8cd1" stroke-width="1.600"/></g>
<g transform="translate(1491.2 693.4)" ><path d="M0.0 6.6H12.5M0.0 10.8H12.5M0.0 15.6H12.5M0.0 19.8H12.5" stroke="#b4b4b4" stroke-width="1.5"/><path d="M20.500 0.500V10.400M15.800 5.800L20.500 10.400L25.200 5.800M20.500 26.700V16.800M15.800 21.400L20.500 16.800L25.200 21.400" stroke="#b4b4b4" stroke-width="1.500"/></g>
<g transform="translate(1646.4 694.1)" ><path d="M4.0 1.0H28.0M14.5 7.2H28.0M14.5 13.4H28.0M14.5 19.6H28.0M4.0 25.8H28.0" stroke="#505050" stroke-width="1.75"/><path d="M0.5 13.4H11M6.7 9.100000000000001L11 13.4L6.7 17.7" stroke="#2b8cd1" stroke-width="1.6"/></g>
<g transform="translate(1687.2 694.1)" ><path d="M4.5 1.0H28.5M15.0 7.2H28.5M15.0 13.4H28.5M15.0 19.6H28.5M4.5 25.8H28.5" stroke="#505050" stroke-width="1.75"/><path d="M11.5 13.4H0.8M5.1 9.100000000000001L0.8 13.4L5.1 17.7" stroke="#2b8cd1" stroke-width="1.6"/></g>
<g transform="translate(1728.7 694.1)" ><path d="M4.0 1.0H28.0M14.5 7.2H28.0M14.5 13.4H28.0M14.5 19.6H28.0M14.5 25.8H28.0" stroke="#505050" stroke-width="1.75"/><path d="M0.5 13.4H11M6.7 9.100000000000001L11 13.4L6.7 17.7" stroke="#2b8cd1" stroke-width="1.6"/></g>
<g transform="translate(1452.0 739.3)" ><path d="M6.050000000000001 0.8H12.55M6.050000000000001 9.3H12.55M9.3 0.8V9.3" stroke="#2b8cd1" stroke-width="1.500"/><path d="M0.0 12.6H17.7M0.0 16.0H17.7" stroke="#505050" stroke-width="1.5"/></g>
<g transform="translate(1452.0 779.6)" ><path d="M0.0 0.8H17.7M0.0 4.2H17.7" stroke="#505050" stroke-width="1.5"/><path d="M6.050000000000001 8.2H12.55M6.050000000000001 16.7H12.55M9.3 8.2V16.7" stroke="#2b8cd1" stroke-width="1.500"/></g>
<g transform="translate(1448.1 817.0)" ><path d="M13.3 5.4H26.5M13.3 10.4H26.5M13.3 15.4H26.5M13.3 20.4H26.5" stroke="#5c5c5c" stroke-width="1.6"/><path d="M5.700 9.500V0.800M1.200 5.300L5.700 0.800L10.200 5.300M5.700 14.600V23.600M1.200 19.100L5.700 23.600L10.200 19.100" stroke="#2b8cd1" stroke-width="1.5"/></g>
<g transform="translate(1485.0 826.0)" ><path d="M0 0H10L5 5.7Z" fill="#222"/></g>
<g transform="translate(1648.7 742.0)" ><path d="M0.8 3.75V10.25M9.0 3.75V10.25M0.8 7H9.0" stroke="#2b8cd1" stroke-width="1.500"/><path d="M2.5 0.8H20.3M11.5 4.9H20.3M11.5 9.0H20.3M2.5 13.1H20.3" stroke="#505050" stroke-width="1.5"/></g>
<g transform="translate(1649.6 782.0)" ><path d="M11.3 3.75V10.25M19.5 3.75V10.25M11.3 7H19.5" stroke="#2b8cd1" stroke-width="1.500"/><path d="M0.0 0.8H17.8M0.0 4.9H8.8M0.0 9.0H8.8M0.0 13.1H17.8" stroke="#505050" stroke-width="1.5"/></g>
<g transform="translate(1648.7 819.6)" ><path d="M0.8 0.3500000000000001V6.85M8.3 0.3500000000000001V6.85M0.8 3.6H8.3" stroke="#2b8cd1" stroke-width="1.500"/><path d="M11.0 3.6H19.5M2.0 8.0H19.5M2.0 12.3H19.5M2.0 16.6H16.5" stroke="#505050" stroke-width="1.5"/></g>
<g transform="translate(1577.7 736.5)" ><path d="M0 5.700H11.300L5.650 0Z" fill="#b3b3b3"/></g>
<g transform="translate(1577.7 754.2)" ><path d="M0 0H11.300L5.650 5.700Z" fill="#b3b3b3"/></g>
<g transform="translate(1577.7 776.9)" ><path d="M0 5.700H11.300L5.650 0Z" fill="#b3b3b3"/></g>
<g transform="translate(1577.7 794.6)" ><path d="M0 0H11.300L5.650 5.700Z" fill="#b3b3b3"/></g>
<g transform="translate(1775.5 736.5)" ><path d="M0 5.700H11.300L5.650 0Z" fill="#b3b3b3"/></g>
<g transform="translate(1775.5 754.2)" ><path d="M0 0H11.300L5.650 5.700Z" fill="#b3b3b3"/></g>
<g transform="translate(1775.5 777.8)" ><path d="M0 5.700H11.300L5.650 0Z" fill="#b3b3b3"/></g>
<g transform="translate(1775.5 795.5)" ><path d="M0 0H11.300L5.650 5.700Z" fill="#b3b3b3"/></g>
<g transform="translate(1775.5 817.7)" ><path d="M0 5.700H11.300L5.650 0Z" fill="#b3b3b3"/></g>
<g transform="translate(1775.5 835.4)" ><path d="M0 0H11.300L5.650 5.700Z" fill="#b3b3b3"/></g>
<g transform="translate(1827.6 218.2)" ><path d="M0 5.300H9.200L4.600 0Z" fill="#bdbdbd"/></g>
<g transform="translate(1827.6 927.0)" ><path d="M0 0H9.200L4.600 5.300Z" fill="#bdbdbd"/></g>
<circle cx="67.900" cy="270.900" r="12.200" fill="#fff" stroke="#333" stroke-width="1.200"/>
<path d="M73.900 264.800L69.800 274.300L61.800 277L66 267.600Z" fill="#2b8cd1"/><circle cx="67.900" cy="270.900" r="2" fill="#fff"/>
<path d="M279.800 961.200L287.200 953L294.600 961.200" stroke="#bcbcbc" stroke-width="2"/>
<path d="M321.600 952.800L329 961L336.400 952.800" stroke="#bcbcbc" stroke-width="2"/>
<g transform="translate(841.7 954.1)" ><path d="M0 0H10L5 5.300Z" fill="#555"/></g>
<g transform="translate(1772.7 954.4)" ><path d="M0 0H9L4.500 5.300Z" fill="#6a6a6a"/></g>
<path d="M1556.700 952.800V958.500H1561.500M1568.300 958.500H1573V952.800" stroke="#555" stroke-width="1.500"/><path d="M1564.900 958.800V949.800M1561.200 953.300L1564.900 949.600L1568.600 953.300" stroke="#2b8cd1" stroke-width="1.500"/><path d="M1556.300 963H1573.400" stroke="#bdbdbd" stroke-width="1.200"/>
<path d="M1598.300 951.400H1615.400" stroke="#bdbdbd" stroke-width="1.200"/><path d="M1598.300 963.500V956.200H1603M1610.500 956.200H1615.300V963.500" stroke="#555" stroke-width="1.500"/><path d="M1606.800 956V965.300M1603.100 961.700L1606.800 965.400L1610.500 961.700" stroke="#2b8cd1" stroke-width="1.500"/>
<circle cx="1656.600" cy="956.600" r="8" stroke="#444" stroke-width="1.300"/><path d="M1662.300 962.300L1665.600 965.600" stroke="#333" stroke-width="2.200"/>
<text x="1653" y="961.6" font-family="Liberation Sans" font-size="14" font-weight="normal" font-style="normal" fill="#2b8cd1" >1</text>
<path d="M1692.600 957.400H1705.200" stroke="#222" stroke-width="1.600"/>
<path d="M1805.600 957.500H1818.200M1811.900 951.200V963.800" stroke="#222" stroke-width="1.600"/>
<path d="M314.4 384.5q1.85 4.100 3.700 0t3.700 0t3.700 0t3.700 0t3.700 0t3.700 0t3.700 0t3.700 0t3.700 0t3.700 0t3.700 0t3.700 0t3.700 0t3.700 0t3.700 0t3.700 0t3.700 0t3.700 0t3.700 0t3.700 0t3.700 0t3.700 0M400.4 384.5q1.85 4.100 3.700 0t3.700 0t3.700 0t3.700 0t3.700 0t3.700 0t3.700 0t3.700 0t3.700 0t3.700 0t3.700 0t3.700 0t3.700 0t3.700 0t3.700 0t3.700 0t3.700 0t3.700 0t3.700 0t3.700 0t3.700 0M314.4 422.0q1.85 4.100 3.700 0t3.700 0t3.700 0t3.700 0t3.700 0t3.700 0t3.700 0t3.700 0t3.700 0t3.700 0t3.700 0t3.700 0t3.700 0t3.700 0M371.9 422.0q1.85 4.100 3.700 0t3.700 0t3.700 0t3.700 0t3.700 0t3.700 0t3.700 0t3.700 0t3.700 0t3.700 0t3.700 0t3.700 0t3.700 0t3.700 0M426.4 422.0q1.85 4.100 3.700 0t3.700 0t3.700 0t3.700 0t3.700 0t3.700 0t3.700 0t3.700 0t3.700 0t3.700 0t3.700 0M472.9 422.0q1.85 4.100 3.700 0t3.700 0t3.700 0t3.700 0t3.700 0M496.9 422.0q1.85 4.100 3.700 0t3.700 0t3.700 0t3.700 0t3.700 0t3.700 0t3.700 0t3.700 0t3.700 0t3.700 0t3.700 0t3.700 0t3.700 0M548.4 422.0q1.85 4.100 3.700 0t3.700 0t3.700 0t3.700 0t3.700 0t3.700 0t3.700 0t3.700 0t3.700 0t3.700 0t3.700 0t3.700 0t3.700 0t3.700 0t3.700 0t3.700 0t3.700 0t3.700 0t3.700 0t3.700 0t3.700 0t3.700 0t3.700 0t3.700 0M640.1 422.0q1.85 4.100 3.700 0t3.700 0t3.700 0t3.700 0t3.700 0t3.700 0t3.700 0t3.700 0t3.700 0t3.700 0t3.700 0t3.700 0t3.700 0t3.700 0t3.700 0t3.700 0t3.700 0t3.700 0t3.700 0t3.700 0t3.700 0t3.700 0t3.700 0t3.700 0M732.8 422.0q1.85 4.100 3.700 0t3.700 0t3.700 0t3.700 0t3.700 0t3.700 0t3.700 0t3.700 0t3.700 0t3.700 0M772.6 422.0q1.85 4.100 3.700 0t3.700 0t3.700 0t3.700 0t3.700 0t3.700 0t3.700 0t3.700 0M807.6 422.0q1.85 4.100 3.700 0t3.700 0t3.700 0t3.700 0t3.700 0t3.700 0t3.700 0t3.700 0t3.700 0t3.700 0t3.700 0M852.8 422.0q1.85 4.100 3.700 0t3.700 0t3.700 0t3.700 0t3.700 0t3.700 0t3.700 0t3.700 0t3.700 0t3.700 0t3.700 0t3.700 0t3.700 0t3.700 0t3.700 0t3.700 0t3.700 0t3.700 0M923.6 422.0q1.85 4.100 3.700 0t3.700 0t3.700 0t3.700 0t3.700 0t3.700 0t3.700 0t3.700 0t3.700 0t3.700 0t3.700 0t3.700 0t3.700 0t3.700 0t3.700 0M985.3 422.0q1.85 4.100 3.700 0t3.700 0t3.700 0t3.700 0t3.700 0t3.700 0t3.700 0t3.700 0t3.700 0t3.700 0t3.700 0t3.700 0t3.700 0t3.700 0t3.700 0t3.700 0M1048.0 422.0q1.85 4.100 3.700 0t3.700 0t3.700 0t3.700 0t3.700 0t3.700 0t3.700 0t3.700 0t3.700 0t3.700 0t3.700 0t3.700 0t3.700 0t3.700 0t3.700 0t3.700 0t3.700 0t3.700 0M314.4 446.4q1.85 4.100 3.700 0t3.700 0t3.700 0t3.700 0M334.9 446.4q1.85 4.100 3.700 0t3.700 0t3.700 0t3.700 0t3.700 0t3.700 0t3.700 0t3.700 0t3.700 0t3.700 0t3.700 0t3.700 0t3.700 0t3.700 0M411.6 446.4q1.85 4.100 3.700 0t3.700 0t3.700 0t3.700 0t3.700 0t3.700 0t3.700 0t3.700 0t3.700 0t3.700 0t3.700 0t3.700 0t3.700 0t3.700 0M467.8 446.4q1.85 4.100 3.700 0t3.700 0t3.700 0t3.700 0t3.700 0t3.700 0t3.700 0t3.700 0t3.700 0t3.700 0t3.700 0t3.700 0t3.700 0t3.700 0t3.700 0M528.8 446.4q1.85 4.100 3.700 0t3.700 0t3.700 0t3.700 0t3.700 0t3.700 0t3.700 0t3.700 0t3.700 0t3.700 0t3.700 0t3.700 0t3.700 0t3.700 0t3.700 0t3.700 0t3.700 0t3.700 0t3.700 0t3.700 0M607.3 446.4q1.85 4.100 3.700 0t3.700 0t3.700 0t3.700 0t3.700 0t3.700 0t3.700 0t3.700 0t3.700 0t3.700 0M649.3 446.4q1.85 4.100 3.700 0t3.700 0t3.700 0t3.700 0t3.700 0t3.700 0t3.700 0t3.700 0M684.0 446.4q1.85 4.100 3.700 0t3.700 0t3.700 0t3.700 0t3.700 0t3.700 0t3.700 0t3.700 0t3.700 0t3.700 0t3.700 0M728.9 446.4q1.85 4.100 3.700 0t3.700 0t3.700 0t3.700 0t3.700 0t3.700 0t3.700 0t3.700 0t3.700 0t3.700 0t3.700 0t3.700 0t3.700 0t3.700 0t3.700 0t3.700 0t3.700 0t3.700 0t3.700 0t3.700 0M807.6 446.4q1.85 4.100 3.700 0t3.700 0t3.700 0t3.700 0t3.700 0M830.1 446.4q1.85 4.100 3.700 0t3.700 0t3.700 0t3.700 0t3.700 0t3.700 0t3.700 0t3.700 0t3.700 0t3.700 0M870.9 446.4q1.85 4.100 3.700 0t3.700 0t3.700 0t3.700 0t3.700 0t3.700 0t3.700 0t3.700 0M926.1 446.4q1.85 4.100 3.700 0t3.700 0t3.700 0t3.700 0t3.700 0t3.700 0t3.700 0t3.700 0t3.700 0t3.700 0t3.700 0t3.700 0t3.700 0t3.700 0t3.700 0t3.700 0t3.700 0t3.700 0t3.700 0t3.700 0M1024.9 446.4q1.85 4.100 3.700 0t3.700 0t3.700 0t3.700 0t3.700 0t3.700 0t3.700 0t3.700 0t3.700 0t3.700 0t3.700 0M1069.0 446.4q1.85 4.100 3.700 0t3.700 0t3.700 0t3.700 0t3.700 0t3.700 0t3.700 0t3.700 0M314.4 470.7q1.85 4.100 3.700 0t3.700 0t3.700 0t3.700 0t3.700 0t3.700 0t3.700 0t3.700 0t3.700 0t3.700 0t3.700 0t3.700 0t3.700 0t3.700 0t3.700 0t3.700 0M399.4 470.7q1.85 4.100 3.700 0t3.700 0t3.700 0t3.700 0t3.700 0t3.700 0M424.6 470.7q1.85 4.100 3.700 0t3.700 0t3.700 0t3.700 0t3.700 0t3.700 0t3.700 0t3.700 0t3.700 0t3.700 0t3.700 0t3.700 0t3.700 0t3.700 0t3.700 0M523.7 470.7q1.85 4.100 3.700 0t3.700 0t3.700 0t3.700 0t3.700 0t3.700 0t3.700 0t3.700 0t3.700 0M561.2 470.7q1.85 4.100 3.700 0t3.700 0t3.700 0t3.700 0t3.700 0t3.700 0t3.700 0t3.700 0t3.700 0t3.700 0t3.700 0M604.6 470.7q1.85 4.100 3.700 0t3.700 0t3.700 0t3.700 0t3.700 0t3.700 0t3.700 0t3.700 0t3.700 0t3.700 0t3.700 0t3.700 0t3.700 0t3.700 0t3.700 0t3.700 0t3.700 0t3.700 0t3.700 0t3.700 0t3.700 0t3.700 0t3.700 0t3.700 0M697.6 470.7q1.85 4.100 3.700 0t3.700 0t3.700 0t3.700 0t3.700 0t3.700 0M722.9 470.7q1.85 4.100 3.700 0t3.700 0t3.700 0t3.700 0t3.700 0t3.700 0t3.700 0t3.700 0M757.3 470.7q1.85 4.100 3.700 0t3.700 0t3.700 0t3.700 0t3.700 0t3.700 0t3.700 0t3.700 0t3.700 0t3.700 0t3.700 0t3.700 0t3.700 0t3.700 0t3.700 0t3.700 0t3.700 0t3.700 0t3.700 0M831.1 470.7q1.85 4.100 3.700 0t3.700 0t3.700 0t3.700 0t3.700 0t3.700 0t3.700 0t3.700 0t3.700 0t3.700 0t3.700 0t3.700 0t3.700 0t3.700 0t3.700 0t3.700 0t3.700 0M898.8 470.7q1.85 4.100 3.700 0t3.700 0t3.700 0t3.700 0t3.700 0t3.700 0t3.700 0M928.1 470.7q1.85 4.100 3.700 0t3.700 0t3.700 0t3.700 0t3.700 0t3.700 0t3.700 0t3.700 0t3.700 0t3.700 0t3.700 0t3.700 0t3.700 0t3.700 0M984.7 470.7q1.85 4.100 3.700 0t3.700 0t3.700 0t3.700 0t3.700 0t3.700 0t3.700 0t3.700 0t3.700 0t3.700 0t3.700 0t3.700 0t3.700 0M1038.2 470.7q1.85 4.100 3.700 0t3.700 0t3.700 0t3.700 0t3.700 0t3.700 0t3.700 0t3.700 0t3.700 0t3.700 0t3.700 0M1083.7 470.7q1.85 4.100 3.700 0t3.700 0t3.700 0t3.700 0t3.700 0M314.4 495.1q1.85 4.100 3.700 0t3.700 0t3.700 0t3.700 0t3.700 0t3.700 0t3.700 0t3.700 0t3.700 0t3.700 0t3.700 0t3.700 0t3.700 0M365.8 495.1q1.85 4.100 3.700 0t3.700 0t3.700 0t3.700 0t3.700 0t3.700 0t3.700 0t3.700 0t3.700 0t3.700 0t3.700 0t3.700 0t3.700 0t3.700 0M423.2 495.1q1.85 4.100 3.700 0t3.700 0t3.700 0t3.700 0t3.700 0t3.700 0t3.700 0t3.700 0t3.700 0t3.700 0t3.700 0t3.700 0t3.700 0t3.700 0M477.6 495.1q1.85 4.100 3.700 0t3.700 0t3.700 0t3.700 0t3.700 0t3.700 0t3.700 0t3.700 0t3.700 0t3.700 0t3.700 0M524.0 495.1q1.85 4.100 3.700 0t3.700 0t3.700 0t3.700 0t3.700 0M547.9 495.1q1.85 4.100 3.700 0t3.700 0t3.700 0t3.700 0t3.700 0t3.700 0t3.700 0t3.700 0t3.700 0t3.700 0t3.700 0t3.700 0t3.700 0M599.3 495.1q1.85 4.100 3.700 0t3.700 0t3.700 0t3.700 0t3.700 0t3.700 0t3.700 0t3.700 0t3.700 0t3.700 0t3.700 0t3.700 0t3.700 0t3.700 0t3.700 0t3.700 0t3.700 0t3.700 0t3.700 0t3.700 0t3.700 0t3.700 0t3.700 0t3.700 0M690.8 495.1q1.85 4.100 3.700 0t3.700 0t3.700 0t3.700 0t3.700 0t3.700 0t3.700 0t3.700 0t3.700 0t3.700 0t3.700 0t3.700 0t3.700 0t3.700 0t3.700 0t3.700 0t3.700 0t3.700 0t3.700 0t3.700 0t3.700 0t3.700 0t3.700 0t3.700 0M783.4 495.1q1.85 4.100 3.700 0t3.700 0t3.700 0t3.700 0t3.700 0t3.700 0t3.700 0t3.700 0t3.700 0t3.700 0M823.0 495.1q1.85 4.100 3.700 0t3.700 0t3.700 0t3.700 0t3.700 0t3.700 0t3.700 0t3.700 0M857.9 495.1q1.85 4.100 3.700 0t3.700 0t3.700 0t3.700 0t3.700 0t3.700 0t3.700 0t3.700 0t3.700 0t3.700 0t3.700 0M903.1 495.1q1.85 4.100 3.700 0t3.700 0t3.700 0t3.700 0t3.700 0t3.700 0t3.700 0t3.700 0t3.700 0t3.700 0t3.700 0t3.700 0t3.700 0t3.700 0t3.700 0t3.700 0t3.700 0t3.700 0M973.7 495.1q1.85 4.100 3.700 0t3.700 0t3.700 0t3.700 0t3.700 0t3.700 0t3.700 0t3.700 0t3.700 0t3.700 0t3.700 0t3.700 0t3.700 0t3.700 0t3.700 0M1035.3 495.1q1.85 4.100 3.700 0t3.700 0t3.700 0t3.700 0t3.700 0t3.700 0t3.700 0t3.700 0t3.700 0t3.700 0t3.700 0t3.700 0t3.700 0t3.700 0t3.700 0t3.700 0M314.4 519.5q1.85 4.100 3.700 0t3.700 0t3.700 0t3.700 0t3.700 0t3.700 0t3.700 0t3.700 0t3.700 0t3.700 0t3.700 0t3.700 0t3.700 0t3.700 0t3.700 0t3.700 0t3.700 0M383.1 519.5q1.85 4.100 3.700 0t3.700 0t3.700 0t3.700 0M403.6 519.5q1.85 4.100 3.700 0t3.700 0t3.700 0t3.700 0t3.700 0t3.700 0t3.700 0t3.700 0t3.700 0t3.700 0t3.700 0t3.700 0t3.700 0t3.700 0M480.5 519.5q1.85 4.100 3.700 0t3.700 0t3.700 0t3.700 0t3.700 0t3.700 0t3.700 0t3.700 0t3.700 0t3.700 0t3.700 0t3.700 0t3.700 0t3.700 0M536.8 519.5q1.85 4.100 3.700 0t3.700 0t3.700 0t3.700 0t3.700 0t3.700 0t3.700 0t3.700 0t3.700 0t3.700 0t3.700 0t3.700 0t3.700 0t3.700 0t3.700 0M597.9 519.5q1.85 4.100 3.700 0t3.700 0t3.700 0t3.700 0t3.700 0t3.700 0t3.700 0t3.700 0t3.700 0t3.700 0t3.700 0t3.700 0t3.700 0t3.700 0t3.700 0t3.700 0t3.700 0t3.700 0t3.700 0t3.700 0M676.6 519.5q1.85 4.100 3.700 0t3.700 0t3.700 0t3.700 0t3.700 0t3.700 0t3.700 0t3.700 0t3.700 0t3.700 0M718.7 519.5q1.85 4.100 3.700 0t3.700 0t3.700 0t3.700 0t3.700 0t3.700 0t3.700 0t3.700 0M753.4 519.5q1.85 4.100 3.700 0t3.700 0t3.700 0t3.700 0t3.700 0t3.700 0t3.700 0t3.700 0t3.700 0t3.700 0t3.700 0M798.4 519.5q1.85 4.100 3.700 0t3.700 0t3.700 0t3.700 0t3.700 0t3.700 0t3.700 0t3.700 0t3.700 0t3.700 0t3.700 0t3.700 0t3.700 0t3.700 0t3.700 0t3.700 0t3.700 0t3.700 0t3.700 0t3.700 0M877.2 519.5q1.85 4.100 3.700 0t3.700 0t3.700 0t3.700 0t3.700 0M899.8 519.5q1.85 4.100 3.700 0t3.700 0t3.700 0t3.700 0t3.700 0t3.700 0t3.700 0t3.700 0t3.700 0t3.700 0M940.7 519.5q1.85 4.100 3.700 0t3.700 0t3.700 0t3.700 0t3.700 0t3.700 0t3.700 0t3.700 0M996.0 519.5q1.85 4.100 3.700 0t3.700 0t3.700 0t3.700 0t3.700 0t3.700 0t3.700 0t3.700 0t3.700 0t3.700 0t3.700 0t3.700 0t3.700 0t3.700 0t3.700 0t3.700 0t3.700 0t3.700 0t3.700 0t3.700 0M314.4 543.9q1.85 4.100 3.700 0t3.700 0t3.700 0t3.700 0t3.700 0t3.700 0t3.700 0t3.700 0t3.700 0t3.700 0t3.700 0M357.9 543.9q1.85 4.100 3.700 0t3.700 0t3.700 0t3.700 0t3.700 0t3.700 0t3.700 0t3.700 0M393.2 543.9q1.85 4.100 3.700 0t3.700 0t3.700 0t3.700 0t3.700 0t3.700 0t3.700 0t3.700 0t3.700 0t3.700 0t3.700 0t3.700 0t3.700 0t3.700 0t3.700 0t3.700 0M478.1 543.9q1.85 4.100 3.700 0t3.700 0t3.700 0t3.700 0t3.700 0t3.700 0M503.4 543.9q1.85 4.100 3.700 0t3.700 0t3.700 0t3.700 0t3.700 0t3.700 0t3.700 0t3.700 0t3.700 0t3.700 0t3.700 0t3.700 0t3.700 0t3.700 0t3.700 0M602.3 543.9q1.85 4.100 3.700 0t3.700 0t3.700 0t3.700 0t3.700 0t3.700 0t3.700 0t3.700 0t3.700 0M639.8 543.9q1.85 4.100 3.700 0t3.700 0t3.700 0t3.700 0t3.700 0t3.700 0t3.700 0t3.700 0t3.700 0t3.700 0t3.700 0M683.2 543.9q1.85 4.100 3.700 0t3.700 0t3.700 0t3.700 0t3.700 0t3.700 0t3.700 0t3.700 0t3.700 0t3.700 0t3.700 0t3.700 0t3.700 0t3.700 0t3.700 0t3.700 0t3.700 0t3.700 0t3.700 0t3.700 0t3.700 0t3.700 0t3.700 0t3.700 0M776.1 543.9q1.85 4.100 3.700 0t3.700 0t3.700 0t3.700 0t3.700 0t3.700 0M801.3 543.9q1.85 4.100 3.700 0t3.700 0t3.700 0t3.700 0t3.700 0t3.700 0t3.700 0t3.700 0M835.6 543.9q1.85 4.100 3.700 0t3.700 0t3.700 0t3.700 0t3.700 0t3.700 0t3.700 0t3.700 0t3.700 0t3.700 0t3.700 0t3.700 0t3.700 0t3.700 0t3.700 0t3.700 0t3.700 0t3.700 0t3.700 0M909.3 543.9q1.85 4.100 3.700 0t3.700 0t3.700 0t3.700 0t3.700 0t3.700 0t3.700 0t3.700 0t3.700 0t3.700 0t3.700 0t3.700 0t3.700 0t3.700 0t3.700 0t3.700 0t3.700 0M977.0 543.9q1.85 4.100 3.700 0t3.700 0t3.700 0t3.700 0t3.700 0t3.700 0t3.700 0M1006.3 543.9q1.85 4.100 3.700 0t3.700 0t3.700 0t3.700 0t3.700 0t3.700 0t3.700 0t3.700 0t3.700 0t3.700 0t3.700 0t3.700 0t3.700 0t3.700 0M1062.8 543.9q1.85 4.100 3.700 0t3.700 0t3.700 0t3.700 0t3.700 0t3.700 0t3.700 0t3.700 0t3.700 0t3.700 0t3.700 0t3.700 0t3.700 0M314.4 568.3q1.85 4.100 3.700 0t3.700 0t3.700 0t3.700 0t3.700 0t3.700 0t3.700 0t3.700 0t3.700 0t3.700 0t3.700 0M360.7 568.3q1.85 4.100 3.700 0t3.700 0t3.700 0t3.700 0t3.700 0M384.6 568.3q1.85 4.100 3.700 0t3.700 0t3.700 0t3.700 0t3.700 0t3.700 0t3.700 0t3.700 0t3.700 0t3.700 0t3.700 0t3.700 0t3.700 0M435.9 568.3q1.85 4.100 3.700 0t3.700 0t3.700 0t3.700 0t3.700 0t3.700 0t3.700 0t3.700 0t3.700 0t3.700 0t3.700 0t3.700 0t3.700 0t3.700 0M493.2 568.3q1.85 4.100 3.700 0t3.700 0t3.700 0t3.700 0t3.700 0t3.700 0t3.700 0t3.700 0t3.700 0t3.700 0t3.700 0t3.700 0t3.700 0M547.5 568.3q1.85 4.100 3.700 0t3.700 0t3.700 0t3.700 0t3.700 0t3.700 0t3.700 0t3.700 0t3.700 0t3.700 0t3.700 0M593.8 568.3q1.85 4.100 3.700 0t3.700 0t3.700 0t3.700 0t3.700 0M617.6 568.3q1.85 4.100 3.700 0t3.700 0t3.700 0t3.700 0t3.700 0t3.700 0t3.700 0t3.700 0t3.700 0t3.700 0t3.700 0t3.700 0t3.700 0M668.9 568.3q1.85 4.100 3.700 0t3.700 0t3.700 0t3.700 0t3.700 0t3.700 0t3.700 0t3.700 0t3.700 0t3.700 0t3.700 0t3.700 0t3.700 0t3.700 0t3.700 0t3.700 0t3.700 0t3.700 0t3.700 0t3.700 0t3.700 0t3.700 0t3.700 0t3.700 0M760.3 568.3q1.85 4.100 3.700 0t3.700 0t3.700 0t3.700 0t3.700 0t3.700 0t3.700 0t3.700 0t3.700 0t3.700 0t3.700 0t3.700 0t3.700 0t3.700 0t3.700 0t3.700 0t3.700 0t3.700 0t3.700 0t3.700 0t3.700 0t3.700 0t3.700 0t3.700 0M852.7 568.3q1.85 4.100 3.700 0t3.700 0t3.700 0t3.700 0t3.700 0t3.700 0t3.700 0t3.700 0t3.700 0M892.2 568.3q1.85 4.100 3.700 0t3.700 0t3.700 0t3.700 0t3.700 0t3.700 0t3.700 0t3.700 0M927.1 568.3q1.85 4.100 3.700 0t3.700 0t3.700 0t3.700 0t3.700 0t3.700 0t3.700 0t3.700 0t3.700 0t3.700 0t3.700 0M972.2 568.3q1.85 4.100 3.700 0t3.700 0t3.700 0t3.700 0t3.700 0t3.700 0t3.700 0t3.700 0t3.700 0t3.700 0t3.700 0t3.700 0t3.700 0t3.700 0t3.700 0t3.700 0t3.700 0t3.700 0M1042.8 568.3q1.85 4.100 3.700 0t3.700 0t3.700 0t3.700 0t3.700 0t3.700 0t3.700 0t3.700 0t3.700 0t3.700 0t3.700 0t3.700 0t3.700 0t3.700 0t3.700 0M314.4 592.7q1.85 4.100 3.700 0t3.700 0t3.700 0t3.700 0t3.700 0t3.700 0t3.700 0t3.700 0t3.700 0t3.700 0t3.700 0t3.700 0t3.700 0t3.700 0t3.700 0t3.700 0M377.1 592.7q1.85 4.100 3.700 0t3.700 0t3.700 0t3.700 0t3.700 0t3.700 0t3.700 0t3.700 0t3.700 0t3.700 0t3.700 0t3.700 0t3.700 0t3.700 0t3.700 0t3.700 0t3.700 0t3.700 0M446.4 592.7q1.85 4.100 3.700 0t3.700 0t3.700 0t3.700 0M467.1 592.7q1.85 4.100 3.700 0t3.700 0t3.700 0t3.700 0t3.700 0t3.700 0t3.700 0t3.700 0t3.700 0t3.700 0t3.700 0t3.700 0t3.700 0t3.700 0M544.6 592.7q1.85 4.100 3.700 0t3.700 0t3.700 0t3.700 0t3.700 0t3.700 0t3.700 0t3.700 0t3.700 0t3.700 0t3.700 0t3.700 0t3.700 0t3.700 0M601.4 592.7q1.85 4.100 3.700 0t3.700 0t3.700 0t3.700 0t3.700 0t3.700 0t3.700 0t3.700 0t3.700 0t3.700 0t3.700 0t3.700 0t3.700 0t3.700 0t3.700 0M662.9 592.7q1.85 4.100 3.700 0t3.700 0t3.700 0t3.700 0t3.700 0t3.700 0t3.700 0t3.700 0t3.700 0t3.700 0t3.700 0t3.700 0t3.700 0t3.700 0t3.700 0t3.700 0t3.700 0t3.700 0t3.700 0t3.700 0M742.1 592.7q1.85 4.100 3.700 0t3.700 0t3.700 0t3.700 0t3.700 0t3.700 0t3.700 0t3.700 0t3.700 0t3.700 0M784.6 592.7q1.85 4.100 3.700 0t3.700 0t3.700 0t3.700 0t3.700 0t3.700 0t3.700 0t3.700 0M819.6 592.7q1.85 4.100 3.700 0t3.700 0t3.700 0t3.700 0t3.700 0t3.700 0t3.700 0t3.700 0t3.700 0t3.700 0t3.700 0M864.8 592.7q1.85 4.100 3.700 0t3.700 0t3.700 0t3.700 0t3.700 0t3.700 0t3.700 0t3.700 0t3.700 0t3.700 0t3.700 0t3.700 0t3.700 0t3.700 0t3.700 0t3.700 0t3.700 0t3.700 0t3.700 0t3.700 0t3.700 0M944.3 592.7q1.85 4.100 3.700 0t3.700 0t3.700 0t3.700 0t3.700 0M967.0 592.7q1.85 4.100 3.700 0t3.700 0t3.700 0t3.700 0t3.700 0t3.700 0t3.700 0t3.700 0t3.700 0t3.700 0M1008.3 592.7q1.85 4.100 3.700 0t3.700 0t3.700 0t3.700 0t3.700 0t3.700 0t3.700 0t3.700 0M314.4 617.1q1.85 4.100 3.700 0t3.700 0t3.700 0t3.700 0t3.700 0t3.700 0t3.700 0t3.700 0t3.700 0t3.700 0t3.700 0t3.700 0t3.700 0t3.700 0t3.700 0t3.700 0t3.700 0t3.700 0t3.700 0t3.700 0M412.0 617.1q1.85 4.100 3.700 0t3.700 0t3.700 0t3.700 0t3.700 0t3.700 0t3.700 0t3.700 0t3.700 0t3.700 0t3.700 0M455.4 617.1q1.85 4.100 3.700 0t3.700 0t3.700 0t3.700 0t3.700 0t3.700 0t3.700 0t3.700 0M490.7 617.1q1.85 4.100 3.700 0t3.700 0t3.700 0t3.700 0t3.700 0t3.700 0t3.700 0t3.700 0t3.700 0t3.700 0t3.700 0t3.700 0t3.700 0t3.700 0t3.700 0t3.700 0M575.3 617.1q1.85 4.100 3.700 0t3.700 0t3.700 0t3.700 0t3.700 0t3.700 0M600.5 617.1q1.85 4.100 3.700 0t3.700 0t3.700 0t3.700 0t3.700 0t3.700 0t3.700 0t3.700 0t3.700 0t3.700 0t3.700 0t3.700 0t3.700 0t3.700 0t3.700 0M699.2 617.1q1.85 4.100 3.700 0t3.700 0t3.700 0t3.700 0t3.700 0t3.700 0t3.700 0t3.700 0t3.700 0M736.6 617.1q1.85 4.100 3.700 0t3.700 0t3.700 0t3.700 0t3.700 0t3.700 0t3.700 0t3.700 0t3.700 0t3.700 0t3.700 0M779.9 617.1q1.85 4.100 3.700 0t3.700 0t3.700 0t3.700 0t3.700 0t3.700 0t3.700 0t3.700 0t3.700 0t3.700 0t3.700 0t3.700 0t3.700 0t3.700 0t3.700 0t3.700 0t3.700 0t3.700 0t3.700 0t3.700 0t3.700 0t3.700 0t3.700 0t3.700 0M872.6 617.1q1.85 4.100 3.700 0t3.700 0t3.700 0t3.700 0t3.700 0t3.700 0M897.8 617.1q1.85 4.100 3.700 0t3.700 0t3.700 0t3.700 0t3.700 0t3.700 0t3.700 0t3.700 0M932.0 617.1q1.85 4.100 3.700 0t3.700 0t3.700 0t3.700 0t3.700 0t3.700 0t3.700 0t3.700 0t3.700 0t3.700 0t3.700 0t3.700 0t3.700 0t3.700 0t3.700 0t3.700 0t3.700 0t3.700 0t3.700 0M1005.6 617.1q1.85 4.100 3.700 0t3.700 0t3.700 0t3.700 0t3.700 0t3.700 0t3.700 0t3.700 0t3.700 0t3.700 0t3.700 0t3.700 0t3.700 0t3.700 0t3.700 0t3.700 0t3.700 0M1073.0 617.1q1.85 4.100 3.700 0t3.700 0t3.700 0t3.700 0t3.700 0t3.700 0t3.700 0M314.4 641.5q1.85 4.100 3.700 0t3.700 0t3.700 0t3.700 0t3.700 0t3.700 0t3.700 0t3.700 0t3.700 0t3.700 0t3.700 0t3.700 0t3.700 0t3.700 0M371.9 641.5q1.85 4.100 3.700 0t3.700 0t3.700 0t3.700 0t3.700 0t3.700 0t3.700 0t3.700 0t3.700 0t3.700 0t3.700 0t3.700 0t3.700 0t3.700 0M426.3 641.5q1.85 4.100 3.700 0t3.700 0t3.700 0t3.700 0t3.700 0t3.700 0t3.700 0t3.700 0t3.700 0t3.700 0t3.700 0M472.7 641.5q1.85 4.100 3.700 0t3.700 0t3.700 0t3.700 0t3.700 0M496.7 641.5q1.85 4.100 3.700 0t3.700 0t3.700 0t3.700 0t3.700 0t3.700 0t3.700 0t3.700 0t3.700 0t3.700 0t3.700 0t3.700 0t3.700 0M314.4 690.3q1.85 4.100 3.700 0t3.700 0t3.700 0t3.700 0t3.700 0t3.700 0t3.700 0t3.700 0t3.700 0t3.700 0M356.6 690.3q1.85 4.100 3.700 0t3.700 0t3.700 0t3.700 0t3.700 0t3.700 0t3.700 0t3.700 0t3.700 0t3.700 0t3.700 0t3.700 0t3.700 0t3.700 0M413.0 690.3q1.85 4.100 3.700 0t3.700 0t3.700 0t3.700 0t3.700 0t3.700 0t3.700 0M441.9 690.3q1.85 4.100 3.700 0t3.700 0t3.700 0t3.700 0t3.700 0t3.700 0t3.700 0t3.700 0t3.700 0t3.700 0M482.8 690.3q1.85 4.100 3.700 0t3.700 0t3.700 0t3.700 0t3.700 0t3.700 0t3.700 0t3.700 0t3.700 0t3.700 0t3.700 0M529.5 690.3q1.85 4.100 3.700 0t3.700 0t3.700 0t3.700 0t3.700 0t3.700 0t3.700 0t3.700 0t3.700 0t3.700 0t3.700 0M595.6 690.3q1.85 4.100 3.700 0t3.700 0t3.700 0t3.700 0t3.700 0t3.700 0t3.700 0t3.700 0t3.700 0t3.700 0t3.700 0t3.700 0t3.700 0t3.700 0t3.700 0t3.700 0t3.700 0t3.700 0t3.700 0t3.700 0M693.6 690.3q1.85 4.100 3.700 0t3.700 0t3.700 0t3.700 0t3.700 0t3.700 0t3.700 0t3.700 0t3.700 0t3.700 0t3.700 0t3.700 0t3.700 0t3.700 0t3.700 0t3.700 0t3.700 0t3.700 0t3.700 0t3.700 0t3.700 0M774.0 690.3q1.85 4.100 3.700 0t3.700 0t3.700 0t3.700 0t3.700 0t3.700 0t3.700 0t3.700 0t3.700 0M856.5 690.3q1.85 4.100 3.700 0t3.700 0t3.700 0t3.700 0t3.700 0t3.700 0t3.700 0t3.700 0t3.700 0t3.700 0t3.700 0t3.700 0t3.700 0t3.700 0t3.700 0t3.700 0t3.700 0t3.700 0t3.700 0M930.6 690.3q1.85 4.100 3.700 0t3.700 0t3.700 0t3.700 0t3.700 0t3.700 0t3.700 0t3.700 0t3.700 0t3.700 0t3.700 0t3.700 0t3.700 0t3.700 0t3.700 0t3.700 0t3.700 0t3.700 0t3.700 0t3.700 0t3.700 0t3.700 0t3.700 0t3.700 0t3.700 0M1026.2 690.3q1.85 4.100 3.700 0t3.700 0t3.700 0t3.700 0t3.700 0t3.700 0t3.700 0M1055.2 690.3q1.85 4.100 3.700 0t3.700 0t3.700 0t3.700 0t3.700 0t3.700 0t3.700 0t3.700 0t3.700 0t3.700 0t3.700 0M314.4 714.6q1.85 4.100 3.700 0t3.700 0t3.700 0t3.700 0t3.700 0t3.700 0t3.700 0t3.700 0t3.700 0t3.700 0t3.700 0t3.700 0t3.700 0t3.700 0M370.5 714.6q1.85 4.100 3.700 0t3.700 0t3.700 0t3.700 0t3.700 0t3.700 0M396.0 714.6q1.85 4.100 3.700 0t3.700 0t3.700 0t3.700 0t3.700 0t3.700 0t3.700 0t3.700 0t3.700 0t3.700 0t3.700 0t3.700 0t3.700 0t3.700 0t3.700 0M456.2 714.6q1.85 4.100 3.700 0t3.700 0t3.700 0t3.700 0t3.700 0t3.700 0t3.700 0t3.700 0t3.700 0t3.700 0t3.700 0M500.1 714.6q1.85 4.100 3.700 0t3.700 0t3.700 0t3.700 0t3.700 0t3.700 0t3.700 0t3.700 0t3.700 0t3.700 0t3.700 0t3.700 0t3.700 0t3.700 0t3.700 0t3.700 0M564.6 714.6q1.85 4.100 3.700 0t3.700 0t3.700 0t3.700 0M585.1 714.6q1.85 4.100 3.700 0t3.700 0t3.700 0t3.700 0t3.700 0t3.700 0t3.700 0t3.700 0t3.700 0t3.700 0M625.9 714.6q1.85 4.100 3.700 0t3.700 0t3.700 0t3.700 0t3.700 0t3.700 0t3.700 0t3.700 0t3.700 0t3.700 0M687.1 714.6q1.85 4.100 3.700 0t3.700 0t3.700 0t3.700 0t3.700 0t3.700 0t3.700 0t3.700 0t3.700 0t3.700 0t3.700 0t3.700 0t3.700 0t3.700 0t3.700 0t3.700 0t3.700 0t3.700 0t3.700 0t3.700 0t3.700 0t3.700 0t3.700 0M795.9 714.6q1.85 4.100 3.700 0t3.700 0t3.700 0t3.700 0t3.700 0t3.700 0t3.700 0t3.700 0t3.700 0t3.700 0t3.700 0M839.8 714.6q1.85 4.100 3.700 0t3.700 0t3.700 0t3.700 0t3.700 0t3.700 0t3.700 0t3.700 0t3.700 0t3.700 0M879.6 714.6q1.85 4.100 3.700 0t3.700 0t3.700 0t3.700 0t3.700 0t3.700 0t3.700 0t3.700 0t3.700 0t3.700 0t3.700 0t3.700 0t3.700 0t3.700 0t3.700 0t3.700 0t3.700 0t3.700 0t3.700 0t3.700 0t3.700 0M961.1 714.6q1.85 4.100 3.700 0t3.700 0t3.700 0t3.700 0t3.700 0t3.700 0t3.700 0M990.7 714.6q1.85 4.100 3.700 0t3.700 0t3.700 0t3.700 0t3.700 0t3.700 0t3.700 0t3.700 0t3.700 0t3.700 0t3.700 0t3.700 0t3.700 0t3.700 0t3.700 0M314.4 739.0q1.85 4.100 3.700 0t3.700 0t3.700 0t3.700 0t3.700 0t3.700 0t3.700 0t3.700 0t3.700 0t3.700 0t3.700 0t3.700 0t3.700 0t3.700 0t3.700 0t3.700 0t3.700 0t3.700 0t3.700 0t3.700 0M391.2 739.0q1.85 4.100 3.700 0t3.700 0t3.700 0t3.700 0t3.700 0t3.700 0t3.700 0t3.700 0t3.700 0t3.700 0t3.700 0t3.700 0t3.700 0t3.700 0t3.700 0t3.700 0t3.700 0t3.700 0t3.700 0M467.0 739.0q1.85 4.100 3.700 0t3.700 0t3.700 0t3.700 0t3.700 0t3.700 0t3.700 0t3.700 0t3.700 0M505.2 739.0q1.85 4.100 3.700 0t3.700 0t3.700 0t3.700 0t3.700 0t3.700 0t3.700 0t3.700 0t3.700 0t3.700 0t3.700 0t3.700 0t3.700 0t3.700 0t3.700 0M564.9 739.0q1.85 4.100 3.700 0t3.700 0t3.700 0t3.700 0t3.700 0t3.700 0t3.700 0t3.700 0t3.700 0t3.700 0t3.700 0t3.700 0t3.700 0t3.700 0M621.1 739.0q1.85 4.100 3.700 0t3.700 0t3.700 0t3.700 0t3.700 0t3.700 0t3.700 0t3.700 0t3.700 0M660.1 739.0q1.85 4.100 3.700 0t3.700 0t3.700 0t3.700 0t3.700 0t3.700 0t3.700 0t3.700 0t3.700 0t3.700 0t3.700 0t3.700 0t3.700 0t3.700 0M716.5 739.0q1.85 4.100 3.700 0t3.700 0t3.700 0t3.700 0M737.1 739.0q1.85 4.100 3.700 0t3.700 0t3.700 0t3.700 0t3.700 0t3.700 0t3.700 0t3.700 0t3.700 0t3.700 0t3.700 0t3.700 0t3.700 0t3.700 0t3.700 0M797.8 739.0q1.85 4.100 3.700 0t3.700 0t3.700 0t3.700 0t3.700 0t3.700 0t3.700 0t3.700 0t3.700 0t3.700 0t3.700 0M842.0 739.0q1.85 4.100 3.700 0t3.700 0t3.700 0t3.700 0t3.700 0t3.700 0t3.700 0t3.700 0t3.700 0t3.700 0t3.700 0t3.700 0t3.700 0t3.700 0t3.700 0M903.0 739.0q1.85 4.100 3.700 0t3.700 0t3.700 0t3.700 0t3.700 0t3.700 0t3.700 0t3.700 0t3.700 0t3.700 0t3.700 0t3.700 0t3.700 0t3.700 0M960.2 739.0q1.85 4.100 3.700 0t3.700 0t3.700 0t3.700 0t3.700 0t3.700 0t3.700 0t3.700 0t3.700 0t3.700 0t3.700 0t3.700 0t3.700 0M1014.4 739.0q1.85 4.100 3.700 0t3.700 0t3.700 0t3.700 0t3.700 0t3.700 0t3.700 0t3.700 0t3.700 0t3.700 0t3.700 0M1060.6 739.0q1.85 4.100 3.700 0t3.700 0t3.700 0t3.700 0t3.700 0M314.4 763.4q1.85 4.100 3.700 0t3.700 0t3.700 0t3.700 0t3.700 0t3.700 0t3.700 0t3.700 0t3.700 0t3.700 0t3.700 0t3.700 0t3.700 0M366.0 763.4q1.85 4.100 3.700 0t3.700 0t3.700 0t3.700 0t3.700 0t3.700 0t3.700 0t3.700 0t3.700 0t3.700 0t3.700 0t3.700 0t3.700 0t3.700 0t3.700 0t3.700 0t3.700 0t3.700 0t3.700 0t3.700 0t3.700 0t3.700 0t3.700 0t3.700 0t3.700 0t3.700 0t3.700 0t3.700 0t3.700 0M477.6 763.4q1.85 4.100 3.700 0t3.700 0t3.700 0t3.700 0t3.700 0t3.700 0t3.700 0t3.700 0t3.700 0t3.700 0t3.700 0t3.700 0t3.700 0t3.700 0t3.700 0t3.700 0t3.700 0t3.700 0t3.700 0t3.700 0t3.700 0t3.700 0t3.700 0M565.6 763.4q1.85 4.100 3.700 0t3.700 0t3.700 0t3.700 0t3.700 0t3.700 0t3.700 0t3.700 0M600.2 763.4q1.85 4.100 3.700 0t3.700 0t3.700 0t3.700 0t3.700 0t3.700 0t3.700 0t3.700 0M635.3 763.4q1.85 4.100 3.700 0t3.700 0t3.700 0t3.700 0t3.700 0t3.700 0t3.700 0t3.700 0t3.700 0t3.700 0t3.700 0M680.7 763.4q1.85 4.100 3.700 0t3.700 0t3.700 0t3.700 0t3.700 0t3.700 0t3.700 0t3.700 0t3.700 0t3.700 0t3.700 0t3.700 0t3.700 0t3.700 0t3.700 0t3.700 0t3.700 0t3.700 0t3.700 0t3.700 0t3.700 0t3.700 0M766.9 763.4q1.85 4.100 3.700 0t3.700 0t3.700 0t3.700 0t3.700 0t3.700 0t3.700 0t3.700 0t3.700 0t3.700 0M807.3 763.4q1.85 4.100 3.700 0t3.700 0t3.700 0t3.700 0t3.700 0t3.700 0t3.700 0t3.700 0t3.700 0t3.700 0t3.700 0t3.700 0t3.700 0t3.700 0t3.700 0t3.700 0t3.700 0t3.700 0t3.700 0M882.5 763.4q1.85 4.100 3.700 0t3.700 0t3.700 0t3.700 0t3.700 0t3.700 0t3.700 0t3.700 0t3.700 0t3.700 0t3.700 0t3.700 0t3.700 0t3.700 0t3.700 0t3.700 0t3.700 0t3.700 0t3.700 0M957.2 763.4q1.85 4.100 3.700 0t3.700 0t3.700 0t3.700 0M978.0 763.4q1.85 4.100 3.700 0t3.700 0t3.700 0t3.700 0t3.700 0t3.700 0t3.700 0t3.700 0t3.700 0t3.700 0t3.700 0t3.700 0t3.700 0t3.700 0t3.700 0t3.700 0M1040.2 763.4q1.85 4.100 3.700 0t3.700 0t3.700 0t3.700 0t3.700 0t3.700 0t3.700 0t3.700 0t3.700 0t3.700 0t3.700 0t3.700 0t3.700 0t3.700 0M314.4 787.8q1.85 4.100 3.700 0t3.700 0t3.700 0t3.700 0t3.700 0t3.700 0t3.700 0t3.700 0t3.700 0t3.700 0t3.700 0t3.700 0t3.700 0t3.700 0t3.700 0M376.0 787.8q1.85 4.100 3.700 0t3.700 0t3.700 0t3.700 0t3.700 0t3.700 0t3.700 0t3.700 0t3.700 0t3.700 0t3.700 0t3.700 0t3.700 0t3.700 0t3.700 0t3.700 0t3.700 0t3.700 0M446.1 787.8q1.85 4.100 3.700 0t3.700 0t3.700 0t3.700 0t3.700 0t3.700 0t3.700 0t3.700 0t3.700 0M483.5 787.8q1.85 4.100 3.700 0t3.700 0t3.700 0t3.700 0t3.700 0t3.700 0t3.700 0t3.700 0t3.700 0t3.700 0t3.700 0t3.700 0t3.700 0t3.700 0t3.700 0t3.700 0t3.700 0t3.700 0t3.700 0M314.4 836.6q1.85 4.100 3.700 0t3.700 0t3.700 0t3.700 0t3.700 0M338.1 836.6q1.85 4.100 3.700 0t3.700 0t3.700 0t3.700 0t3.700 0t3.700 0t3.700 0t3.700 0t3.700 0M374.4 836.6q1.85 4.100 3.700 0t3.700 0t3.700 0t3.700 0t3.700 0t3.700 0t3.700 0t3.700 0t3.700 0t3.700 0t3.700 0M445.3 836.6q1.85 4.100 3.700 0t3.700 0t3.700 0t3.700 0t3.700 0t3.700 0t3.700 0t3.700 0t3.700 0t3.700 0t3.700 0t3.700 0t3.700 0t3.700 0M499.8 836.6q1.85 4.100 3.700 0t3.700 0t3.700 0t3.700 0t3.700 0t3.700 0t3.700 0t3.700 0t3.700 0t3.700 0t3.700 0t3.700 0t3.700 0t3.700 0t3.700 0t3.700 0t3.700 0t3.700 0M569.8 836.6q1.85 4.100 3.700 0t3.700 0t3.700 0t3.700 0t3.700 0t3.700 0t3.700 0t3.700 0t3.700 0M609.0 836.6q1.85 4.100 3.700 0t3.700 0t3.700 0t3.700 0t3.700 0t3.700 0t3.700 0t3.700 0t3.700 0t3.700 0t3.700 0t3.700 0t3.700 0t3.700 0t3.700 0t3.700 0t3.700 0M676.0 836.6q1.85 4.100 3.700 0t3.700 0t3.700 0t3.700 0t3.700 0t3.700 0t3.700 0t3.700 0t3.700 0t3.700 0t3.700 0t3.700 0t3.700 0t3.700 0M730.7 836.6q1.85 4.100 3.700 0t3.700 0t3.700 0t3.700 0t3.700 0t3.700 0t3.700 0t3.700 0t3.700 0t3.700 0t3.700 0t3.700 0t3.700 0M781.4 836.6q1.85 4.100 3.700 0t3.700 0t3.700 0t3.700 0t3.700 0t3.700 0t3.700 0t3.700 0t3.700 0t3.700 0t3.700 0t3.700 0t3.700 0t3.700 0t3.700 0t3.700 0t3.700 0t3.700 0t3.700 0t3.700 0t3.700 0t3.700 0t3.700 0t3.700 0t3.700 0t3.700 0M883.4 836.6q1.85 4.100 3.700 0t3.700 0t3.700 0t3.700 0t3.700 0t3.700 0t3.700 0t3.700 0t3.700 0t3.700 0t3.700 0t3.700 0t3.700 0t3.700 0t3.700 0t3.700 0t3.700 0M950.6 836.6q1.85 4.100 3.700 0t3.700 0t3.700 0t3.700 0t3.700 0t3.700 0t3.700 0t3.700 0t3.700 0t3.700 0t3.700 0t3.700 0t3.700 0t3.700 0t3.700 0t3.700 0M1015.8 836.6q1.85 4.100 3.700 0t3.700 0t3.700 0t3.700 0t3.700 0t3.700 0t3.700 0t3.700 0M1049.0 836.6q1.85 4.100 3.700 0t3.700 0t3.700 0t3.700 0M314.4 861.0q1.85 4.100 3.700 0t3.700 0t3.700 0t3.700 0t3.700 0t3.700 0t3.700 0t3.700 0t3.700 0t3.700 0t3.700 0t3.700 0t3.700 0t3.700 0t3.700 0M398.2 861.0q1.85 4.100 3.700 0t3.700 0t3.700 0t3.700 0t3.700 0t3.700 0M423.9 861.0q1.85 4.100 3.700 0t3.700 0t3.700 0t3.700 0t3.700 0t3.700 0t3.700 0t3.700 0t3.700 0t3.700 0t3.700 0t3.700 0t3.700 0t3.700 0t3.700 0t3.700 0t3.700 0t3.700 0t3.700 0t3.700 0t3.700 0t3.700 0M509.9 861.0q1.85 4.100 3.700 0t3.700 0t3.700 0t3.700 0t3.700 0t3.700 0t3.700 0t3.700 0t3.700 0t3.700 0t3.700 0t3.700 0t3.700 0t3.700 0t3.700 0t3.700 0t3.700 0t3.700 0t3.700 0t3.700 0t3.700 0t3.700 0t3.700 0t3.700 0t3.700 0M605.7 861.0q1.85 4.100 3.700 0t3.700 0t3.700 0t3.700 0t3.700 0t3.700 0t3.700 0t3.700 0t3.700 0t3.700 0M648.0 861.0q1.85 4.100 3.700 0t3.700 0t3.700 0t3.700 0t3.700 0t3.700 0t3.700 0t3.700 0t3.700 0t3.700 0t3.700 0t3.700 0t3.700 0t3.700 0M704.5 861.0q1.85 4.100 3.700 0t3.700 0t3.700 0t3.700 0t3.700 0t3.700 0t3.700 0M733.5 861.0q1.85 4.100 3.700 0t3.700 0t3.700 0t3.700 0t3.700 0t3.700 0t3.700 0t3.700 0t3.700 0t3.700 0M774.5 861.0q1.85 4.100 3.700 0t3.700 0t3.700 0t3.700 0t3.700 0t3.700 0t3.700 0t3.700 0t3.700 0t3.700 0t3.700 0M821.2 861.0q1.85 4.100 3.700 0t3.700 0t3.700 0t3.700 0t3.700 0t3.700 0t3.700 0t3.700 0t3.700 0t3.700 0t3.700 0M887.5 861.0q1.85 4.100 3.700 0t3.700 0t3.700 0t3.700 0t3.700 0t3.700 0t3.700 0t3.700 0t3.700 0t3.700 0t3.700 0t3.700 0t3.700 0t3.700 0t3.700 0t3.700 0t3.700 0t3.700 0t3.700 0t3.700 0M985.7 861.0q1.85 4.100 3.700 0t3.700 0t3.700 0t3.700 0t3.700 0t3.700 0t3.700 0t3.700 0t3.700 0t3.700 0t3.700 0t3.700 0t3.700 0t3.700 0t3.700 0t3.700 0t3.700 0t3.700 0t3.700 0t3.700 0t3.700 0M1066.3 861.0q1.85 4.100 3.700 0t3.700 0t3.700 0t3.700 0t3.700 0t3.700 0t3.700 0t3.700 0t3.700 0M357.9 885.4q1.85 4.100 3.700 0t3.700 0t3.700 0t3.700 0t3.700 0t3.700 0t3.700 0t3.700 0t3.700 0t3.700 0t3.700 0t3.700 0t3.700 0t3.700 0t3.700 0t3.700 0t3.700 0t3.700 0t3.700 0M430.8 885.4q1.85 4.100 3.700 0t3.700 0t3.700 0t3.700 0t3.700 0t3.700 0t3.700 0t3.700 0t3.700 0t3.700 0t3.700 0t3.700 0t3.700 0t3.700 0t3.700 0t3.700 0t3.700 0t3.700 0t3.700 0t3.700 0t3.700 0t3.700 0t3.700 0t3.700 0M525.0 885.4q1.85 4.100 3.700 0t3.700 0t3.700 0t3.700 0t3.700 0t3.700 0t3.700 0M553.4 885.4q1.85 4.100 3.700 0t3.700 0t3.700 0t3.700 0t3.700 0t3.700 0t3.700 0t3.700 0t3.700 0t3.700 0M596.0 885.4q1.85 4.100 3.700 0t3.700 0t3.700 0t3.700 0t3.700 0t3.700 0t3.700 0t3.700 0t3.700 0t3.700 0t3.700 0t3.700 0t3.700 0t3.700 0M651.8 885.4q1.85 4.100 3.700 0t3.700 0t3.700 0t3.700 0t3.700 0t3.700 0M677.1 885.4q1.85 4.100 3.700 0t3.700 0t3.700 0t3.700 0t3.700 0t3.700 0t3.700 0t3.700 0t3.700 0t3.700 0t3.700 0t3.700 0t3.700 0t3.700 0t3.700 0M736.9 885.4q1.85 4.100 3.700 0t3.700 0t3.700 0t3.700 0t3.700 0t3.700 0t3.700 0t3.700 0t3.700 0t3.700 0t3.700 0M780.6 885.4q1.85 4.100 3.700 0t3.700 0t3.700 0t3.700 0t3.700 0t3.700 0t3.700 0t3.700 0t3.700 0t3.700 0t3.700 0t3.700 0t3.700 0t3.700 0t3.700 0t3.700 0M844.6 885.4q1.85 4.100 3.700 0t3.700 0t3.700 0t3.700 0M864.9 885.4q1.85 4.100 3.700 0t3.700 0t3.700 0t3.700 0t3.700 0t3.700 0t3.700 0t3.700 0t3.700 0t3.700 0M905.4 885.4q1.85 4.100 3.700 0t3.700 0t3.700 0t3.700 0t3.700 0t3.700 0t3.700 0t3.700 0t3.700 0t3.700 0M966.2 885.4q1.85 4.100 3.700 0t3.700 0t3.700 0t3.700 0t3.700 0t3.700 0t3.700 0t3.700 0t3.700 0t3.700 0t3.700 0t3.700 0t3.700 0t3.700 0t3.700 0t3.700 0t3.700 0t3.700 0t3.700 0t3.700 0t3.700 0t3.700 0t3.700 0M1074.4 885.4q1.85 4.100 3.700 0t3.700 0t3.700 0t3.700 0t3.700 0t3.700 0t3.700 0t3.700 0t3.700 0t3.700 0t3.700 0M314.4 909.8q1.85 4.100 3.700 0t3.700 0t3.700 0t3.700 0t3.700 0t3.700 0t3.700 0t3.700 0t3.700 0t3.700 0M354.5 909.8q1.85 4.100 3.700 0t3.700 0t3.700 0t3.700 0t3.700 0t3.700 0t3.700 0t3.700 0t3.700 0t3.700 0t3.700 0t3.700 0t3.700 0t3.700 0t3.700 0t3.700 0t3.700 0t3.700 0t3.700 0t3.700 0t3.700 0M436.6 909.8q1.85 4.100 3.700 0t3.700 0t3.700 0t3.700 0t3.700 0t3.700 0t3.700 0M466.5 909.8q1.85 4.100 3.700 0t3.700 0t3.700 0t3.700 0t3.700 0t3.700 0t3.700 0t3.700 0t3.700 0t3.700 0t3.700 0t3.700 0t3.700 0t3.700 0t3.700 0M526.2 909.8q1.85 4.100 3.700 0t3.700 0t3.700 0t3.700 0t3.700 0t3.700 0t3.700 0t3.700 0t3.700 0t3.700 0t3.700 0t3.700 0t3.700 0t3.700 0t3.700 0t3.700 0t3.700 0t3.700 0t3.700 0t3.700 0M603.2 909.8q1.85 4.100 3.700 0t3.700 0t3.700 0t3.700 0t3.700 0t3.700 0t3.700 0t3.700 0t3.700 0t3.700 0t3.700 0t3.700 0t3.700 0t3.700 0t3.700 0t3.700 0t3.700 0t3.700 0t3.700 0M679.1 909.8q1.85 4.100 3.700 0t3.700 0t3.700 0t3.700 0t3.700 0t3.700 0t3.700 0t3.700 0t3.700 0M717.4 909.8q1.85 4.100 3.700 0t3.700 0t3.700 0t3.700 0t3.700 0t3.700 0t3.700 0t3.700 0t3.700 0t3.700 0t3.700 0t3.700 0t3.700 0t3.700 0t3.700 0M777.1 909.8q1.85 4.100 3.700 0t3.700 0t3.700 0t3.700 0t3.700 0t3.700 0t3.700 0t3.700 0t3.700 0t3.700 0t3.700 0t3.700 0t3.700 0t3.700 0M833.4 909.8q1.85 4.100 3.700 0t3.700 0t3.700 0t3.700 0t3.700 0t3.700 0t3.700 0t3.700 0t3.700 0M872.5 909.8q1.85 4.100 3.700 0t3.700 0t3.700 0t3.700 0t3.700 0t3.700 0t3.700 0t3.700 0t3.700 0t3.700 0t3.700 0t3.700 0t3.700 0t3.700 0M929.0 909.8q1.85 4.100 3.700 0t3.700 0t3.700 0t3.700 0M949.7 909.8q1.85 4.100 3.700 0t3.700 0t3.700 0t3.700 0t3.700 0t3.700 0t3.700 0t3.700 0t3.700 0t3.700 0t3.700 0t3.700 0t3.700 0t3.700 0t3.700 0M1010.4 909.8q1.85 4.100 3.700 0t3.700 0t3.700 0t3.700 0t3.700 0t3.700 0t3.700 0t3.700 0t3.700 0t3.700 0t3.700 0M1054.7 909.8q1.85 4.100 3.700 0t3.700 0t3.700 0t3.700 0t3.700 0t3.700 0t3.700 0t3.700 0t3.700 0t3.700 0t3.700 0t3.700 0t3.700 0t3.700 0t3.700 0" stroke="#e8202b" stroke-width="1.950" fill="none" stroke-linejoin="round"/>
</svg>
</body></html>
